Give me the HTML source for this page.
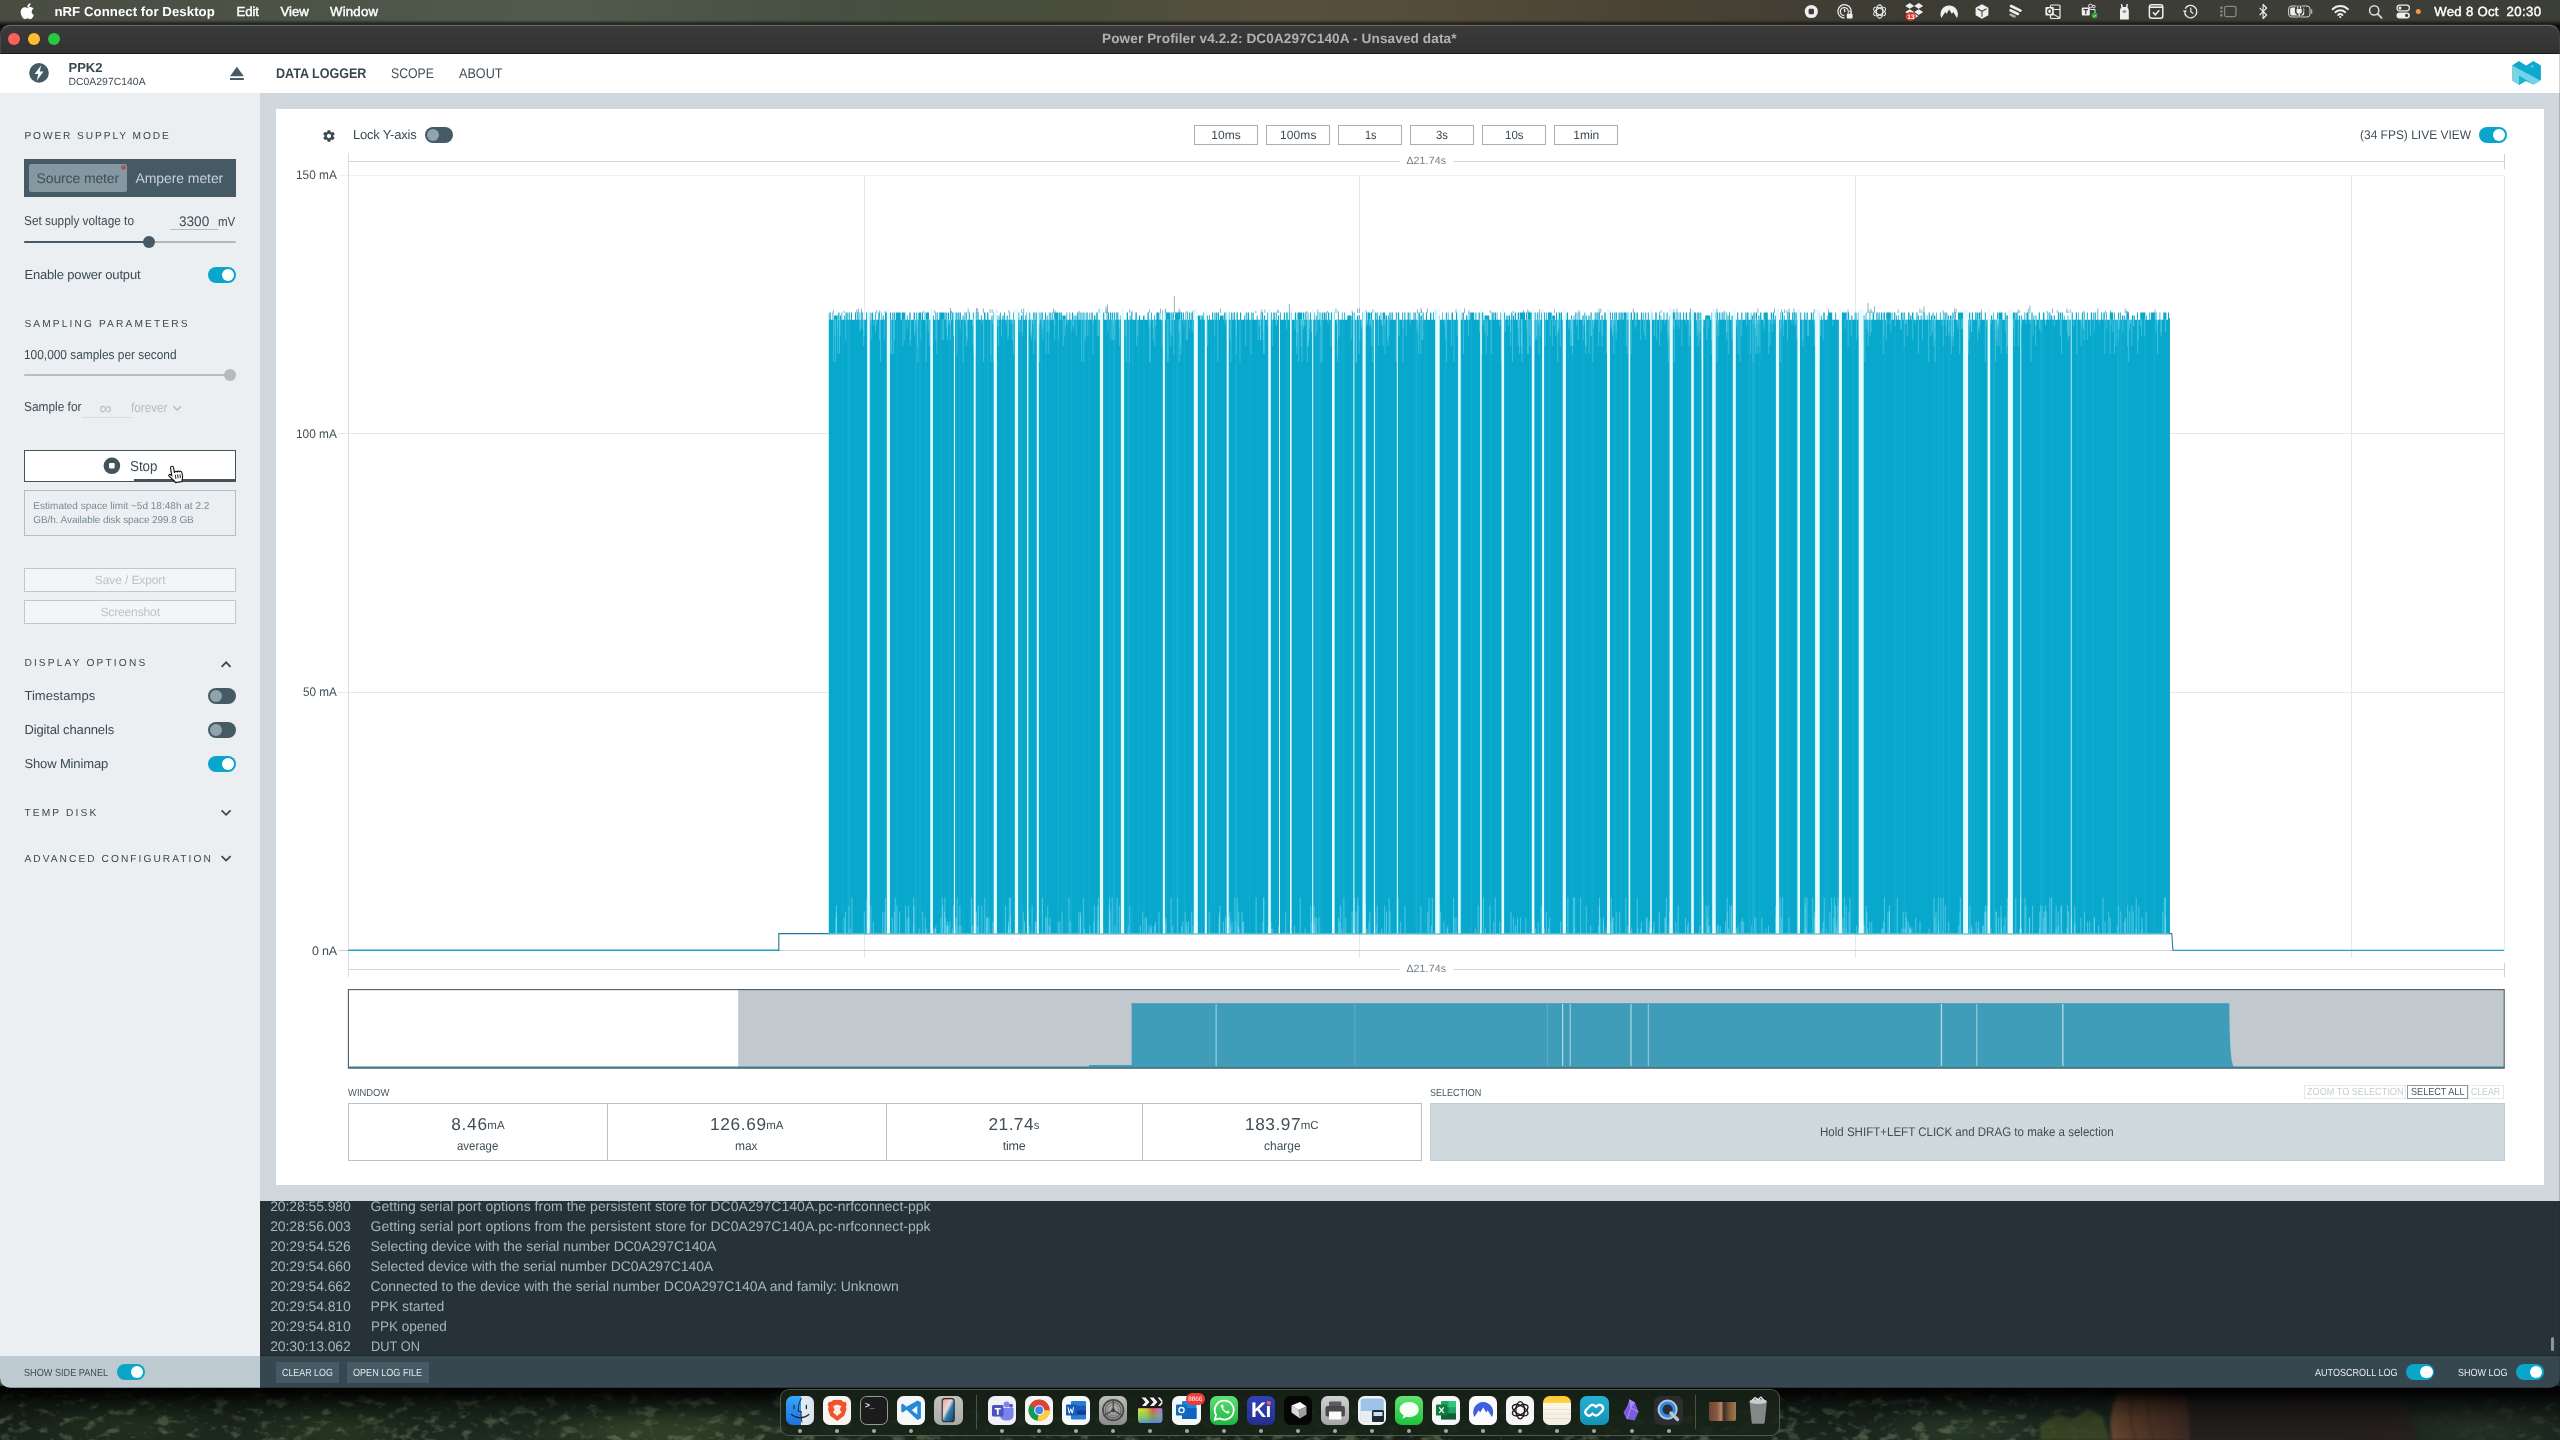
<!DOCTYPE html>
<html lang="en"><head><meta charset="utf-8">
<title>Power Profiler v4.2.2: DC0A297C140A - Unsaved data*</title>
<style>

html,body{margin:0;padding:0;}
body{width:2560px;height:1440px;position:relative;overflow:hidden;background:#1d2b1f;font-family:"Liberation Sans",sans-serif;}
.a{position:absolute;box-sizing:border-box;}
.t{position:absolute;white-space:nowrap;font-family:"Liberation Sans",sans-serif;text-rendering:geometricPrecision;}
svg{position:absolute;overflow:visible;}
#texts{position:absolute;left:0;top:0;width:2560px;height:1440px;will-change:transform;}
.tg{position:absolute;width:28.2px;height:16.2px;border-radius:8.1px;box-sizing:border-box;}
.tg.on{background:#0aa5cb;}
.tg.off{background:#455a64;}
.tg i{position:absolute;top:1.9px;width:12.2px;height:12.2px;border-radius:50%;}
.tg.on i{right:1.9px;background:#fff;}
.tg.off i{left:1.9px;background:#90a4ae;}
.btn{position:absolute;box-sizing:border-box;border:1px solid #a7afb3;background:#fff;}

</style></head>
<body>
<div class="a" style="left:0;top:0;width:2560px;height:30px;background:linear-gradient(90deg,#4a4c41 0%,#4c5447 12%,#515b4c 22%,#465041 33%,#4a4d3c 42%,#57503d 50%,#544a38 57%,#4a4335 64%,#3d3c33 74%,#3b3d36 86%,#3c3e38 100%);"></div>
<div class="a" style="left:0;top:20px;width:2560px;height:16px;background:linear-gradient(rgba(16,16,14,0),rgba(12,12,10,.9) 32%,rgba(10,10,9,.96) 100%);"></div>
<div class="a" style="left:0;top:1380px;width:2560px;height:60px;background:radial-gradient(ellipse 90px 26px at 330px 48px,#2f4228 0%,rgba(50,70,40,0) 100%),radial-gradient(ellipse 110px 26px at 130px 44px,#2b3d28 0%,rgba(50,70,40,0) 100%),radial-gradient(ellipse 120px 24px at 640px 50px,#3d5030 0%,rgba(50,70,40,0) 100%),radial-gradient(ellipse 120px 26px at 700px 46px,#34482e 0%,rgba(50,70,40,0) 100%),radial-gradient(ellipse 100px 24px at 1960px 48px,#33472f 0%,rgba(50,70,40,0) 100%),radial-gradient(ellipse 120px 24px at 2480px 48px,#2c3c2c 0%,rgba(50,70,40,0) 100%),linear-gradient(90deg,#1c2a1d 0%,#223225 20%,#1b291d 45%,#19271d 60%,#1f2d25 78%,#1b2720 100%);"></div>
<svg style="left:0;top:1380px" width="2560" height="60" viewBox="0 0 2560 60"><defs><filter id="fol" x="0" y="0" width="100%" height="100%"><feTurbulence type="fractalNoise" baseFrequency="0.07 0.11" numOctaves="3" seed="11"/><feColorMatrix type="matrix" values="0 0 0 0 0.30  0 0 0 0 0.40  0 0 0 0 0.22  4.2 0 0 0 -2.25"/></filter><linearGradient id="folm" x1="0" y1="0" x2="1" y2="0"><stop offset="0" stop-color="#fff"/><stop offset=".78" stop-color="#fff"/><stop offset=".83" stop-color="#000"/><stop offset=".94" stop-color="#000"/><stop offset="1" stop-color="#777"/></linearGradient><mask id="folk"><rect width="2560" height="60" fill="url(#folm)"/></mask></defs><rect width="2560" height="60" filter="url(#fol)" mask="url(#folk)" opacity=".45"/></svg>
<svg style="left:0;top:1380px" width="2560" height="60" viewBox="0 0 2560 60"><defs><linearGradient id="hr" x1="0" y1="0" x2="1" y2="0"><stop offset="0" stop-color="#7a543c"/><stop offset=".25" stop-color="#68452f"/><stop offset=".55" stop-color="#5a3b2a"/><stop offset="1" stop-color="#45302a"/></linearGradient><filter id="hb"><feGaussianBlur stdDeviation="1.6"/></filter></defs><g filter="url(#hb)"><path d="M2185 12C2230 10 2300 12 2400 18L2420 60H2185Z" fill="#2f2623" opacity=".9"/><path d="M2118 12C2150 8 2176 10 2186 16L2190 60H2112C2108 44 2112 26 2118 12Z" fill="url(#hr)"/><path d="M2134 14c-6 14-4 30 2 46M2150 12c-4 16-2 32 4 48" stroke="#3f2a20" stroke-width="2" fill="none" opacity=".6"/><path d="M2040 44l18-10 14 6 16-12 14 8 8 24h-70z" fill="#5c6e2e" opacity=".55"/></g></svg>
<div class="a" style="left:0;top:1386px;width:2560px;height:54px;background:linear-gradient(rgba(0,0,0,.97) 0,rgba(0,0,0,.9) 14%,rgba(0,0,0,.55) 32%,rgba(0,0,0,.28) 60%,rgba(0,0,0,.12) 100%);"></div>
<div class="a" style="left:780.3px;top:1389.4px;width:999.4px;height:46.2px;border-radius:9px;background:rgba(25,36,25,.86);border:1px solid rgba(150,165,145,.42);"></div>
<div class="a" style="left:976px;top:1395px;width:1px;height:34px;background:rgba(150,160,140,.4);"></div>
<div class="a" style="left:1695.3px;top:1395px;width:1px;height:34px;background:rgba(150,160,140,.4);"></div>
<div class="a" style="left:786.0px;top:1396.2px;width:28.4px;height:28.4px;border-radius:6.6px;background:linear-gradient(90deg,rgba(0,0,0,0) 0,rgba(0,0,0,0) 53%,#e4ebf3 53%,#d9e2ec 100%),linear-gradient(#35a8f8,#1f6fe2);overflow:hidden;"><svg style="left:0;top:0" width="28.4" height="28.4" viewBox="0 0 28.4 28.4"><path d="M8 9.5v3M20.4 9.5v3" stroke="#1d2b3a" stroke-width="1.3" stroke-linecap="round"/><path d="M5.5 18.5c5 4.400 12.400 4.400 17.400 0" stroke="#1d2b3a" stroke-width="1.2" fill="none" stroke-linecap="round"/><path d="M15.6 2c-2.500 4-3.400 8.600-3.400 13.400h3c-.3 4 .2 8 .8 11" stroke="#1d2b3a" stroke-width="1" fill="none"/></svg></div>
<div class="a" style="left:798.2px;top:1429.2px;width:4px;height:4px;border-radius:50%;background:#a6a8a2;"></div>
<div class="a" style="left:823.0px;top:1396.2px;width:28.4px;height:28.4px;border-radius:6.6px;background:#f7f4f2;overflow:hidden;"><svg style="left:0;top:0" width="28.4" height="28.4" viewBox="0 0 28.4 28.4"><path d="M14.2 4l4.200 0 1.800 2 2.400-.3 1.200 3.300-1 1.400.6 3.200-2.200 6.200-7 5.200-7-5.200-2.200-6.200.6-3.200-1-1.400 1.200-3.300 2.400.3 1.800-2z" fill="#f1522b"/><path d="M14.200 8.500l4 1.500-1.300 3.800 1.600 2.400-4.300 3.800-4.300-3.800 1.600-2.400-1.300-3.800z" fill="#fbe9e3"/></svg></div>
<div class="a" style="left:835.2px;top:1429.2px;width:4px;height:4px;border-radius:50%;background:#a6a8a2;"></div>
<div class="a" style="left:860.0px;top:1396.2px;width:28.4px;height:28.4px;border-radius:6.6px;background:#1c1c1c;overflow:hidden;border:1.5px solid #9a9a9a;"><span class="t" style="left:4.200px;top:3.600px;font-size:8.500px;line-height:9px;color:#f2f2f2;font-weight:700;letter-spacing:-.2px;will-change:transform">&gt;_</span></div>
<div class="a" style="left:872.2px;top:1429.2px;width:4px;height:4px;border-radius:50%;background:#a6a8a2;"></div>
<div class="a" style="left:897.1px;top:1396.2px;width:28.4px;height:28.4px;border-radius:6.6px;background:#f4f6f8;overflow:hidden;"><svg style="left:0;top:0" width="28.4" height="28.4" viewBox="0 0 28.4 28.4"><path d="M20.500 4.500l3.400 1.700v16l-3.400 1.700-11-10.200-3.700 2.900-1.500-.8v-7.200l1.500-.8 3.700 2.900zM20.300 9.800l-5.600 4.400 5.600 4.400z" fill="#2489d8"/></svg></div>
<div class="a" style="left:909.3px;top:1429.2px;width:4px;height:4px;border-radius:50%;background:#a6a8a2;"></div>
<div class="a" style="left:934.3px;top:1396.2px;width:28.4px;height:28.4px;border-radius:6.6px;background:linear-gradient(#c2c2be,#a9a9a5);overflow:hidden;"><svg style="left:0;top:0" width="28.4" height="28.4" viewBox="0 0 28.4 28.4"><defs><linearGradient id="ph" x1="0" y1="0" x2="1" y2="1"><stop offset="0" stop-color="#f29a8c"/><stop offset=".42" stop-color="#ecd6dc"/><stop offset=".58" stop-color="#2c7fae"/><stop offset="1" stop-color="#123a60"/></linearGradient></defs><rect x="8.200" y="2.600" width="12" height="23.200" rx="2.600" fill="url(#ph)" stroke="#26282c" stroke-width="1.100"/></svg></div>
<div class="a" style="left:987.5px;top:1396.2px;width:28.4px;height:28.4px;border-radius:6.6px;background:#f1f0f8;overflow:hidden;"><svg style="left:0;top:0" width="28.4" height="28.4" viewBox="0 0 28.4 28.4"><circle cx="18.600" cy="8.600" r="3" fill="#7b83eb"/><circle cx="23" cy="9.800" r="2" fill="#5059c9"/><path d="M12 12h13.500v7.500a5 5 0 0 1-5 5h-3.500a5 5 0 0 1-5-5z" fill="#7b83eb"/><rect x="4" y="9" width="11.500" height="11.500" rx="1.500" fill="#4b53bc"/><path d="M6.800 12h6v1.600h-2.100v5.200h-1.800v-5.200h-2.100z" fill="#fff"/></svg></div>
<div class="a" style="left:999.7px;top:1429.2px;width:4px;height:4px;border-radius:50%;background:#a6a8a2;"></div>
<div class="a" style="left:1025.1px;top:1396.2px;width:28.4px;height:28.4px;border-radius:6.6px;background:#f4f4f2;overflow:hidden;"><svg style="left:0;top:0" width="28.4" height="28.4" viewBox="0 0 28.4 28.4"><circle cx="14.200" cy="14.200" r="10.600" fill="#db4437"/><path d="M14.200 14.200L5 8.900A10.600 10.600 0 0 0 12.500 24.700z" fill="#0f9d58"/><path d="M14.200 14.200L12.500 24.700A10.600 10.600 0 0 0 24.700 12.500z" fill="#ffcd40"/><path d="M14.200 14.200h10.500A10.600 10.600 0 0 0 5 8.900z" fill="#db4437"/><circle cx="14.200" cy="14.200" r="5" fill="#f4f4f2"/><circle cx="14.200" cy="14.200" r="3.900" fill="#4285f4"/></svg></div>
<div class="a" style="left:1037.3px;top:1429.2px;width:4px;height:4px;border-radius:50%;background:#a6a8a2;"></div>
<div class="a" style="left:1061.7px;top:1396.2px;width:28.4px;height:28.4px;border-radius:6.6px;background:#f6f7f9;overflow:hidden;"><svg style="left:0;top:0" width="28.4" height="28.4" viewBox="0 0 28.4 28.4"><rect x="9" y="5" width="15" height="18.400" rx="1.200" fill="#2b7cd3"/><rect x="9" y="9.600" width="15" height="4.600" fill="#185abd"/><rect x="9" y="14.200" width="15" height="4.600" fill="#103f91"/><rect x="4" y="8.600" width="11" height="11" rx="1.200" fill="#185abd"/><path d="M6 11.200l1.300 6 1.500-4.400 1.500 4.400 1.300-6" stroke="#fff" stroke-width="1" fill="none"/></svg></div>
<div class="a" style="left:1073.9px;top:1429.2px;width:4px;height:4px;border-radius:50%;background:#a6a8a2;"></div>
<div class="a" style="left:1098.8px;top:1396.2px;width:28.4px;height:28.4px;border-radius:6.6px;background:linear-gradient(#bdbdbb,#8b8b89);overflow:hidden;"><svg style="left:0;top:0" width="28.4" height="28.4" viewBox="0 0 28.4 28.4"><circle cx="14.200" cy="14.200" r="10.200" fill="none" stroke="#4a4a4a" stroke-width="1.800"/><circle cx="14.200" cy="14.200" r="7.800" fill="none" stroke="#6a6a6a" stroke-width="1.400"/><circle cx="14.200" cy="14.200" r="5.600" fill="none" stroke="#7a7a7a" stroke-width="1"/><path d="M14.200 14.200V5M14.200 14.200l8 4.600M14.200 14.200l-8 4.600" stroke="#444" stroke-width="1.200"/><circle cx="14.200" cy="14.200" r="2" fill="#444"/></svg></div>
<div class="a" style="left:1111.0px;top:1429.2px;width:4px;height:4px;border-radius:50%;background:#a6a8a2;"></div>
<div class="a" style="left:1135.8px;top:1396.2px;width:28.4px;height:28.4px;border-radius:6.6px;background:transparent;overflow:hidden;"><svg style="left:0;top:0" width="28.4" height="28.4" viewBox="0 0 28.4 28.4"><defs><linearGradient id="fc" x1="0" y1="0" x2="1" y2="0"><stop offset="0" stop-color="#f6e93a"/><stop offset=".35" stop-color="#f3c23a"/><stop offset=".6" stop-color="#f2504a"/><stop offset=".85" stop-color="#e85ad0"/><stop offset="1" stop-color="#b46cf0"/></linearGradient><linearGradient id="fc2" x1="0" y1="0" x2="0" y2="1"><stop offset="0" stop-color="#39c05a" stop-opacity="0"/><stop offset=".55" stop-color="#49d05a" stop-opacity=".55"/><stop offset="1" stop-color="#3b8cf2" stop-opacity=".85"/></linearGradient></defs><path d="M2 4.500Q2 1.500 5 1.500H23.400Q26.400 1.500 26.400 4.500V10.500H2z" fill="#1a1a1a"/><path d="M5.500 1.500l4 4.500-4 4.500h4l4-4.500-4-4.500zM13.500 1.500l4 4.500-4 4.500h4l4-4.500-4-4.500zM21.500 1.500l4 4.500-4 4.500h2.500l2.400-3v-3l-2.400-3z" fill="#f1f1f1"/><rect x="2" y="10.500" width="24.400" height="16.400" rx="3.600" fill="url(#fc)"/><rect x="2" y="10.500" width="24.400" height="16.400" rx="3.600" fill="url(#fc2)"/><rect x="2" y="10" width="24.400" height="2.200" fill="#1a1a1a"/></svg></div>
<div class="a" style="left:1148.0px;top:1429.2px;width:4px;height:4px;border-radius:50%;background:#a6a8a2;"></div>
<div class="a" style="left:1172.4px;top:1396.2px;width:28.4px;height:28.4px;border-radius:6.6px;background:#f4f7fa;overflow:hidden;"><svg style="left:0;top:0" width="28.4" height="28.4" viewBox="0 0 28.4 28.4"><rect x="10" y="5" width="14.500" height="18" rx="1.200" fill="#1a86e0"/><rect x="10" y="12" width="14.500" height="11" fill="#0f63bd"/><rect x="4" y="8.600" width="11" height="11" rx="1.200" fill="#0f6cbd"/><circle cx="9.500" cy="14.100" r="2.600" fill="none" stroke="#fff" stroke-width="1.300"/></svg></div>
<div class="a" style="left:1184.6px;top:1429.2px;width:4px;height:4px;border-radius:50%;background:#a6a8a2;"></div>
<div class="a" style="left:1210.0px;top:1396.2px;width:28.4px;height:28.4px;border-radius:6.6px;background:linear-gradient(#5ee077,#1fb53f);overflow:hidden;"><svg style="left:0;top:0" width="28.4" height="28.4" viewBox="0 0 28.4 28.4"><path d="M14.200 4.600a9.500 9.500 0 0 0-8.100 14.400l-1.300 4.700 4.800-1.300a9.500 9.500 0 1 0 4.600-17.800z" fill="none" stroke="#fff" stroke-width="1.800"/><path d="M10.600 9.500c1.600 4.600 3.500 6.600 7.600 8.300l1.700-1.900-2.300-1.500-1.200 1c-1.700-.9-2.700-2-3.500-3.500l1-1.200-1.400-2.400z" fill="#fff"/></svg></div>
<div class="a" style="left:1222.2px;top:1429.2px;width:4px;height:4px;border-radius:50%;background:#a6a8a2;"></div>
<div class="a" style="left:1247.1px;top:1396.2px;width:28.4px;height:28.4px;border-radius:6.6px;background:linear-gradient(#3142b8,#232f8e);overflow:hidden;"><span class="t" style="left:3.600px;top:4px;font-size:21px;line-height:21px;color:#fff;font-weight:700;letter-spacing:-.6px;will-change:transform">Ki</span><div class="a" style="left:20.200px;top:5px;width:3.400px;height:3.400px;border-radius:50%;background:#ef5a60"></div></div>
<div class="a" style="left:1259.3px;top:1429.2px;width:4px;height:4px;border-radius:50%;background:#a6a8a2;"></div>
<div class="a" style="left:1283.6px;top:1396.2px;width:28.4px;height:28.4px;border-radius:6.6px;background:#060606;overflow:hidden;"><svg style="left:0;top:0" width="28.4" height="28.4" viewBox="0 0 28.4 28.4"><path d="M7.500 9.500l8.500-3.500 6.500 4.500-8 3.500z" fill="#fdfdfd"/><path d="M14.500 14l8-3.500v8l-6.500 4z" fill="#9d9d9d"/><path d="M7.500 9.500l7 4.500 1.500 8.500-8.500-6z" fill="#d9d9d9"/></svg></div>
<div class="a" style="left:1295.8px;top:1429.2px;width:4px;height:4px;border-radius:50%;background:#a6a8a2;"></div>
<div class="a" style="left:1320.8px;top:1396.2px;width:28.4px;height:28.4px;border-radius:6.6px;background:linear-gradient(#d2d2d2,#a5a5a5);overflow:hidden;"><svg style="left:0;top:0" width="28.4" height="28.4" viewBox="0 0 28.4 28.4"><rect x="8" y="5.500" width="12.400" height="6" rx="1" fill="#5b5b5b"/><rect x="4.500" y="10" width="19.400" height="10.500" rx="2" fill="#4a4a4a"/><rect x="8" y="15.500" width="12.400" height="8" fill="#fafafa"/></svg></div>
<div class="a" style="left:1333.0px;top:1429.2px;width:4px;height:4px;border-radius:50%;background:#a6a8a2;"></div>
<div class="a" style="left:1358.0px;top:1396.2px;width:28.4px;height:28.4px;border-radius:6.6px;background:#f1f3f6;overflow:hidden;"><svg style="left:0;top:0" width="28.4" height="28.4" viewBox="0 0 28.4 28.4"><rect x="2.600" y="2.600" width="23.200" height="23.200" rx="3" fill="#9cc3ea"/><rect x="2.600" y="15" width="23.200" height="10.800" fill="#e9edf0"/><rect x="14" y="14" width="12" height="12" rx="1.500" fill="#1d2a3a"/><rect x="15.500" y="16" width="9" height="4" fill="#cfe0ee"/></svg></div>
<div class="a" style="left:1370.2px;top:1429.2px;width:4px;height:4px;border-radius:50%;background:#a6a8a2;"></div>
<div class="a" style="left:1394.9px;top:1396.2px;width:28.4px;height:28.4px;border-radius:6.6px;background:linear-gradient(#63e36d,#1fc03d);overflow:hidden;"><svg style="left:0;top:0" width="28.4" height="28.4" viewBox="0 0 28.4 28.4"><path d="M14.200 6c5.400 0 9.600 3.300 9.600 7.600s-4.200 7.600-9.600 7.600c-1 0-2-.1-2.900-.4-1.100.9-2.700 1.500-4.200 1.600.8-.8 1.400-1.800 1.600-2.900-2.500-1.400-4.100-3.500-4.100-5.900 0-4.300 4.200-7.600 9.600-7.600z" fill="#f3fff4"/></svg></div>
<div class="a" style="left:1407.1px;top:1429.2px;width:4px;height:4px;border-radius:50%;background:#a6a8a2;"></div>
<div class="a" style="left:1431.9px;top:1396.2px;width:28.4px;height:28.4px;border-radius:6.6px;background:#f5f8f6;overflow:hidden;"><svg style="left:0;top:0" width="28.4" height="28.4" viewBox="0 0 28.4 28.4"><rect x="9" y="5" width="15" height="18.400" rx="1.200" fill="#21a366"/><rect x="16.500" y="5" width="7.500" height="6.200" fill="#33c481"/><rect x="9" y="11.200" width="7.500" height="6.200" fill="#107c41"/><rect x="9" y="17.400" width="15" height="6" fill="#185c37"/><rect x="4" y="8.600" width="11" height="11" rx="1.200" fill="#107c41"/><path d="M7.200 11.300l4.600 5.600M11.800 11.300l-4.600 5.600" stroke="#fff" stroke-width="1.200"/></svg></div>
<div class="a" style="left:1444.1px;top:1429.2px;width:4px;height:4px;border-radius:50%;background:#a6a8a2;"></div>
<div class="a" style="left:1469.1px;top:1396.2px;width:28.4px;height:28.4px;border-radius:6.6px;background:#fbfbfd;overflow:hidden;"><svg style="left:0;top:0" width="28.4" height="28.4" viewBox="0 0 28.4 28.4"><path d="M5.500 21a10 10 0 1 1 17.400 0l-4.200-6.800-1.400 2.300-3.100-5.100-3.100 5.100-1.400-2.300z" fill="#3e5fdf"/></svg></div>
<div class="a" style="left:1481.3px;top:1429.2px;width:4px;height:4px;border-radius:50%;background:#a6a8a2;"></div>
<div class="a" style="left:1506.1px;top:1396.2px;width:28.4px;height:28.4px;border-radius:6.6px;background:#f6f6f6;overflow:hidden;"><svg style="left:0;top:0" width="28.4" height="28.4" viewBox="0 0 28.4 28.4"><g fill="none" stroke="#1a1a1a" stroke-width="1.300"><ellipse cx="14.200" cy="14.200" rx="4.300" ry="8.600"/><ellipse cx="14.200" cy="14.200" rx="4.300" ry="8.600" transform="rotate(60 14.200 14.200)"/><ellipse cx="14.200" cy="14.200" rx="4.300" ry="8.600" transform="rotate(120 14.200 14.200)"/></g></svg></div>
<div class="a" style="left:1518.3px;top:1429.2px;width:4px;height:4px;border-radius:50%;background:#a6a8a2;"></div>
<div class="a" style="left:1542.8px;top:1396.2px;width:28.4px;height:28.4px;border-radius:6.6px;background:linear-gradient(#fdc62b 0,#fdd54a 24%,#fbf6ea 24%,#f3eee2 100%);overflow:hidden;"><svg style="left:0;top:0" width="28.4" height="28.4" viewBox="0 0 28.4 28.4"><path d="M0 13.500h28.400M0 18h28.400M0 22.500h28.400" stroke="#d9d4c8" stroke-width=".6"/></svg></div>
<div class="a" style="left:1555.0px;top:1429.2px;width:4px;height:4px;border-radius:50%;background:#a6a8a2;"></div>
<div class="a" style="left:1580.2px;top:1396.2px;width:28.4px;height:28.4px;border-radius:6.6px;background:linear-gradient(#23b1d3,#1492b6);overflow:hidden;"><svg style="left:0;top:0" width="28.4" height="28.4" viewBox="0 0 28.4 28.4"><g fill="none" stroke="#fff" stroke-width="2.300" stroke-linecap="round"><path d="M12.500 17.500l-1.500 1.500a3.600 3.600 0 0 1-5-5l4-4a3.600 3.600 0 0 1 5 0"/><path d="M16 11l1.500-1.500a3.600 3.600 0 0 1 5 5l-4 4a3.600 3.600 0 0 1-5 0"/></g></svg></div>
<div class="a" style="left:1592.4px;top:1429.2px;width:4px;height:4px;border-radius:50%;background:#a6a8a2;"></div>
<div class="a" style="left:1617.4px;top:1396.2px;width:28.4px;height:28.4px;border-radius:6.6px;background:transparent;overflow:hidden;"><svg style="left:0;top:0" width="28.4" height="28.4" viewBox="0 0 28.4 28.4"><path d="M12.500 3.500l5.500 3 3.500 9.500-4 8.500-8-1.500-3-6.500 3.500-6z" fill="#7b5be0"/><path d="M12.500 3.500l1.500 8.500-4 11M14 12l7.500 4" stroke="#b9a4ff" stroke-width=".8" fill="none"/><path d="M12.500 3.500l5.500 3-4 5.500z" fill="#a48cff"/></svg></div>
<div class="a" style="left:1629.6px;top:1429.2px;width:4px;height:4px;border-radius:50%;background:#a6a8a2;"></div>
<div class="a" style="left:1654.3px;top:1396.2px;width:28.4px;height:28.4px;border-radius:6.6px;background:#2b2d31;overflow:hidden;"><svg style="left:0;top:0" width="28.4" height="28.4" viewBox="0 0 28.4 28.4"><circle cx="13.600" cy="13.600" r="8.600" fill="#2b2d31" stroke="#b9c4cf" stroke-width="3"/><circle cx="13.600" cy="13.600" r="6.600" fill="none" stroke="#2a8df0" stroke-width="3"/><path d="M17 17l6.500 6.500" stroke="#b9c4cf" stroke-width="3.400" stroke-linecap="round"/></svg></div>
<div class="a" style="left:1666.5px;top:1429.2px;width:4px;height:4px;border-radius:50%;background:#a6a8a2;"></div>
<div class="a" style="left:1708.500px;top:1399.500px;width:27px;height:21px;border-radius:2px;background:linear-gradient(90deg,#6a4536 0,#8a5a40 30%,#b98a6a 45%,#3a2a26 55%,#7a5a3c 75%,#a47850 100%);border-top:2.500px solid #1b1715;"></div>
<svg style="left:1744.3px;top:1396.2px" width="28.4" height="28.4" viewBox="0 0 28.400 28.400"><path d="M5.500 5.500h17.400l-2.200 21a1.500 1.500 0 0 1-1.500 1.300h-10a1.500 1.500 0 0 1-1.500-1.300z" fill="#8c9091" opacity=".92"/><ellipse cx="14.200" cy="5.500" rx="8.700" ry="2.600" fill="#c9cdce"/><path d="M8 4.500l3-3 3 2 3-2.500 3 3.500" stroke="#e9ecec" stroke-width="1.200" fill="none"/></svg>
<div class="a" style="left:1185.500px;top:1393px;width:19.600px;height:12px;border-radius:6px;background:#ee3b34;"></div>
<div id="win" class="a" style="left:0;top:0;width:2559.8px;height:1387.7px;clip-path:inset(24.5px 0 0 0 round 10px);">
<div class="a" style="left:0px;top:24px;width:2560.0px;height:30.0px;background:linear-gradient(#3b3b3b,#323232);border-bottom:1px solid #1a1a1a;"></div>
<div class="a" style="left:0;top:24.5px;width:2559.8px;height:29px;border-radius:10px 10px 0 0;border-top:1px solid rgba(120,120,120,.75);border-left:1px solid rgba(110,110,110,.35);border-right:1px solid rgba(110,110,110,.35);"></div>
<div class="a" style="left:7.8px;top:32.599999999999994px;width:12.4px;height:12.4px;background:#fe5f57;border-radius:50%;"></div>
<div class="a" style="left:27.8px;top:32.599999999999994px;width:12.4px;height:12.4px;background:#febc2e;border-radius:50%;"></div>
<div class="a" style="left:47.8px;top:32.599999999999994px;width:12.4px;height:12.4px;background:#28c840;border-radius:50%;"></div>
<div class="a" style="left:0px;top:54px;width:2560.0px;height:39.0px;background:#fff;"></div>
<div class="a" style="left:0px;top:93px;width:260.0px;height:1262.5px;background:#ebeff1;"></div>
<div class="a" style="left:0px;top:1356px;width:260.0px;height:32.0px;background:#bdcacf;"></div>
<div class="a" style="left:260px;top:93px;width:2300.0px;height:1108.0px;background:#d0d8de;"></div>
<div class="a" style="left:276px;top:109px;width:2267.7px;height:1075.7px;background:#fff;"></div>
<div class="a" style="left:260px;top:1200.7px;width:2300.0px;height:154.8px;background:#263238;"></div>
<div class="a" style="left:260px;top:1355.5px;width:2300.0px;height:32.5px;background:#37474f;"></div>
<div class="a" style="left:2550.7px;top:1336.5px;width:3.8px;height:14.5px;background:#8c979c;border-radius:2px;"></div>
<div class="a" style="left:275.5px;top:1361.5px;width:63.8px;height:21.5px;background:#455a64;"></div>
<div class="a" style="left:346.6px;top:1361.5px;width:82.0px;height:21.5px;background:#455a64;"></div>
<div class="tg on" style="left:2406.3px;top:1364.2px"><i></i></div>
<div class="tg on" style="left:2516px;top:1364.2px"><i></i></div>
<div class="tg on" style="left:117px;top:1364.2px"><i></i></div>
<div class="a" style="left:24px;top:159.2px;width:212.0px;height:37.8px;background:#455a64;"></div>
<div class="a" style="left:29.2px;top:164.2px;width:97.8px;height:27.6px;background:#8598a2;border-radius:2px;"></div>
<div class="a" style="left:121px;top:165.3px;width:4.8px;height:4.8px;background:#a25a60;border-radius:50%;"></div>
<div class="a" style="left:170.4px;top:228.8px;width:47.3px;height:1.0px;background:#b0bec5;"></div>
<div class="a" style="left:24px;top:241px;width:212.0px;height:2.0px;background:#b3b8bb;border-radius:1px;"></div>
<div class="a" style="left:24px;top:241px;width:125.0px;height:2.0px;background:#455a64;border-radius:1px;"></div>
<div class="a" style="left:143.1px;top:236.1px;width:11.8px;height:11.8px;background:#455a64;border-radius:50%;"></div>
<div class="tg on" style="left:208px;top:267px"><i></i></div>
<div class="a" style="left:24px;top:374px;width:212.0px;height:2.0px;background:#b9bec1;border-radius:1px;"></div>
<div class="a" style="left:223.9px;top:369.1px;width:11.8px;height:11.8px;background:#b6babd;border-radius:50%;"></div>
<div class="a" style="left:82.3px;top:416.5px;width:49.0px;height:1.0px;background:#d5dbde;"></div>
<div class="a" style="left:24px;top:450.3px;width:212.0px;height:31.4px;background:#fff;border:1.4px solid #44525a;"></div>
<div class="a" style="left:134.4px;top:478.8px;width:101.6px;height:2.9px;background:#44525a;"></div>
<div class="a" style="left:24px;top:490.4px;width:212.0px;height:45.2px;border:1px solid #b4bec4;"></div>
<div class="a" style="left:24px;top:568.2px;width:212.0px;height:23.6px;background:#f3f5f6;border:1px solid #bfc8cc;"></div>
<div class="a" style="left:24px;top:600.2px;width:212.0px;height:23.6px;background:#f3f5f6;border:1px solid #bfc8cc;"></div>
<div class="tg off" style="left:208px;top:687.9px"><i></i></div>
<div class="tg off" style="left:208px;top:721.9px"><i></i></div>
<div class="tg on" style="left:208px;top:755.8px"><i></i></div>
<div class="tg off" style="left:425px;top:127px"><i></i></div>
<div class="tg on" style="left:2479px;top:127px"><i></i></div>
<div class="btn" style="left:1194px;top:125.3px;width:64px;height:19.6px;"></div>
<div class="btn" style="left:1266.2px;top:125.3px;width:64px;height:19.6px;"></div>
<div class="btn" style="left:1338.3px;top:125.3px;width:64px;height:19.6px;"></div>
<div class="btn" style="left:1410.2px;top:125.3px;width:64px;height:19.6px;"></div>
<div class="btn" style="left:1482.2px;top:125.3px;width:64px;height:19.6px;"></div>
<div class="btn" style="left:1554.3px;top:125.3px;width:64px;height:19.6px;"></div>
<div class="a" style="left:348px;top:1103px;width:1074.0px;height:58.0px;border:1px solid #b9c1c5;background:#fff;"></div>
<div class="a" style="left:607.2px;top:1103px;width:1.0px;height:58.0px;background:#b9c1c5;"></div>
<div class="a" style="left:885.8px;top:1103px;width:1.0px;height:58.0px;background:#b9c1c5;"></div>
<div class="a" style="left:1141.9px;top:1103px;width:1.0px;height:58.0px;background:#b9c1c5;"></div>
<div class="a" style="left:1430px;top:1103px;width:1074.5px;height:58.0px;background:#cfd8dc;border:1px solid #c2ccd1;"></div>
<div class="a" style="left:2304px;top:1085px;width:102.4px;height:13.7px;border:1px solid #e6e9eb;"></div>
<div class="a" style="left:2406.8px;top:1085px;width:60.9px;height:13.7px;border:1px solid #8d989d;"></div>
<div class="a" style="left:2468.2px;top:1085px;width:35.4px;height:13.7px;border:1px solid #e6e9eb;"></div>
</div>
<svg id="chart" style="left:0;top:0" width="2560" height="1440" viewBox="0 0 2560 1440">
<g stroke="#e6e8e9" stroke-width="1" fill="none" shape-rendering="crispEdges">
<path d="M337.5 433.7H2504.2"/>
<path d="M337.5 692.1H2504.2"/>
<path d="M864.0 175.5V958"/>
<path d="M1359.3 175.5V958"/>
<path d="M1855.6 175.5V958"/>
<path d="M2351.6 175.5V958"/>
<path d="M2504.2 175.5V950.4"/>
</g>
<path d="M337.5 175.5H2504.2" stroke="#eff1f2" stroke-width="1" fill="none" shape-rendering="crispEdges"/>
<g stroke="#cdd2d5" stroke-width="1" fill="none" shape-rendering="crispEdges">
<path d="M348.5 153V976.5" stroke="#d9dcde"/>
<path d="M337.5 950.4H2504.2"/>
<path d="M348.5 161.5H1399.5M1453.5 161.5H2504.5M2504.5 153.5V169"/>
<path d="M348.5 969.5H1399.5M1453.5 969.5H2504.5M2504.5 963V976.5"/>
</g>
<path d="M828.8 933.6V319.8V312.4H829.6V319.8H830.1V312.4H830.9V319.8H832.5V312.4H833.3V319.8H834.0V315.6H837.7V319.8H838.2V312.4H839.4V319.8H839.9V315.6H841.0V319.8H841.5V312.4H842.3V319.8H843.9V315.6H844.8V319.8H845.5V312.4H846.7V319.8H847.2V312.4H847.9V319.8H848.6V312.4H849.7V319.8H850.9V312.4H852.0V319.8H855.0V312.4H856.3V319.8H857.2V312.4H858.6V319.8H859.5V312.4H860.3V319.8H861.0V312.4H861.8V319.8H862.3V312.4H863.1V319.8H866.1V312.4H867.0V319.8H868.6V312.4H870.0V319.8H870.5V312.4H871.5V319.8H872.0V312.4H873.0V319.8H875.2V312.4H876.1V319.8H878.3V312.4H879.8V319.8H881.4V312.4H882.1V319.8H882.8V315.6H883.8V319.8H885.0V312.4H888.9V319.8H889.6V312.4H891.0V319.8H892.2V312.4H893.4V319.8H894.1V312.4H895.0V319.8H895.7V312.4H900.7V319.8H901.6V312.4H905.3V319.8H906.9V315.6H907.7V319.8H909.3V312.4H910.6V319.8H913.6V312.4H915.0V319.8H916.2V312.4H917.2V319.8H918.4V312.4H921.1V319.8H921.8V312.4H923.0V319.8H924.6V312.4H925.4V319.8H925.9V312.4H929.0V319.8H931.2V312.4H932.2V319.8H932.7V315.6H933.8V319.8H935.0V312.4H935.7V319.8H936.6V312.4H937.7V319.8H939.3V312.4H944.7V319.8H945.4V312.4H946.8V319.8H947.7V312.4H949.1V319.8H950.0V312.4H951.4V319.8H952.1V312.4H953.5V319.8H954.2V312.4H955.5V319.8H956.2V312.4H957.5V319.8H958.2V312.4H959.3V319.8H959.8V312.4H960.9V319.8H962.5V315.6H963.6V319.8H964.5V312.4H965.5V319.8H966.2V312.4H967.1V319.8H968.7V312.4H969.8V319.8H972.8V312.4H974.2V319.8H975.4V312.4H976.7V319.8H977.4V312.4H978.6V319.8H980.8V315.6H981.8V319.8H984.0V312.4H985.5V319.8H987.1V312.4H988.4V319.8H991.4V315.6H992.5V319.8H993.2V312.4H994.0V319.8H996.2V315.6H997.4V319.8H998.6V315.6H999.4V319.8H999.9V312.4H1000.8V319.8H1002.4V315.6H1003.6V319.8H1004.1V312.4H1005.1V319.8H1006.7V315.6H1007.8V319.8H1009.4V312.4H1010.2V319.8H1013.2V312.4H1014.0V319.8H1017.0V312.4H1017.9V319.8H1018.4V312.4H1019.3V319.8H1020.9V315.6H1022.2V319.8H1022.7V312.4H1023.7V319.8H1025.3V315.6H1026.0V319.8H1026.5V312.4H1027.7V319.8H1029.3V312.4H1030.2V319.8H1033.2V312.4H1034.6V319.8H1035.5V312.4H1037.0V319.8H1038.2V312.4H1039.0V319.8H1039.5V312.4H1040.5V319.8H1041.4V312.4H1042.8V319.8H1045.0V312.4H1046.0V319.8H1046.7V315.6H1047.6V319.8H1048.8V312.4H1049.6V319.8H1050.3V312.4H1051.4V319.8H1052.3V312.4H1053.3V319.8H1054.2V312.4H1058.3V319.8H1058.8V312.4H1059.9V319.8H1060.4V312.4H1061.9V319.8H1062.4V315.6H1065.7V319.8H1066.4V312.4H1067.2V319.8H1069.4V312.4H1070.3V319.8H1071.9V312.4H1073.1V319.8H1073.6V315.6H1074.5V319.8H1075.4V315.6H1076.6V319.8H1077.1V312.4H1078.0V319.8H1078.5V312.4H1079.5V319.8H1080.4V312.4H1081.1V319.8H1081.6V312.4H1082.5V319.8H1083.4V312.4H1084.5V319.8H1085.7V312.4H1086.6V319.8H1087.1V312.4H1087.8V319.8H1089.4V312.4H1090.2V319.8H1091.4V312.4H1092.8V319.8H1094.0V315.6H1095.4V319.8H1096.3V312.4H1097.8V319.8H1100.8V312.4H1102.1V319.8H1103.0V312.4H1104.3V319.8H1106.5V312.4H1107.5V319.8H1108.0V312.4H1109.0V319.8H1109.9V312.4H1111.1V319.8H1111.8V312.4H1112.9V319.8H1113.8V312.4H1114.9V319.8H1115.8V312.4H1116.7V319.8H1117.2V312.4H1118.3V319.8H1119.9V315.6H1120.6V319.8H1121.3V312.4H1122.1V319.8H1123.0V315.6H1123.7V319.8H1126.7V312.4H1128.0V319.8H1129.6V315.6H1130.5V319.8H1131.2V312.4H1132.4V319.8H1135.4V312.4H1136.8V319.8H1139.0V315.6H1140.1V319.8H1143.1V315.6H1144.5V319.8H1147.5V312.4H1148.8V319.8H1151.0V312.4H1151.8V319.8H1154.0V315.6H1154.8V319.8H1156.4V312.4H1158.9V319.8H1159.6V312.4H1160.3V319.8H1162.5V312.4H1164.0V319.8H1165.6V312.4H1170.3V319.8H1170.8V312.4H1171.7V319.8H1172.4V312.4H1173.8V319.8H1175.0V312.4H1180.3V319.8H1180.8V312.4H1182.0V319.8H1182.7V312.4H1183.9V319.8H1185.5V312.4H1186.2V319.8H1187.1V312.4H1187.9V319.8H1189.1V312.4H1190.2V319.8H1191.4V312.4H1192.9V319.8H1193.8V312.4H1195.3V319.8H1196.5V315.6H1200.5V319.8H1201.4V315.6H1202.8V319.8H1203.3V312.4H1204.1V319.8H1205.0V312.4H1206.4V319.8H1206.9V315.6H1207.8V319.8H1209.0V315.6H1209.8V319.8H1212.0V312.4H1212.9V319.8H1213.8V312.4H1214.6V319.8H1215.5V312.4H1216.9V319.8H1217.6V312.4H1219.0V319.8H1219.9V315.6H1223.6V319.8H1224.1V312.4H1225.1V319.8H1225.6V312.4H1226.4V319.8H1228.6V312.4H1229.5V319.8H1231.1V312.4H1232.4V319.8H1233.6V312.4H1234.9V319.8H1236.5V312.4H1237.8V319.8H1240.0V312.4H1241.2V319.8H1244.2V315.6H1245.0V319.8H1245.7V312.4H1246.7V319.8H1247.6V312.4H1249.1V319.8H1251.3V312.4H1252.3V319.8H1252.8V312.4H1253.7V319.8H1256.7V315.6H1257.6V319.8H1260.6V312.4H1261.4V319.8H1261.9V312.4H1263.0V319.8H1263.9V315.6H1265.1V319.8H1267.3V312.4H1268.3V319.8H1269.0V312.4H1269.9V319.8H1270.8V312.4H1271.8V319.8H1273.4V312.4H1274.8V319.8H1275.7V312.4H1276.7V319.8H1277.9V315.6H1279.3V319.8H1279.8V312.4H1280.8V319.8H1283.8V312.4H1285.0V319.8H1286.2V312.4H1287.7V319.8H1288.9V312.4H1289.8V319.8H1290.5V312.4H1291.9V319.8H1294.9V312.4H1296.2V319.8H1297.4V312.4H1302.2V319.8H1302.9V312.4H1304.3V319.8H1305.2V312.4H1306.4V319.8H1307.6V312.4H1308.4V319.8H1310.0V312.4H1310.9V319.8H1313.9V312.4H1314.6V319.8H1315.8V315.6H1316.7V319.8H1317.4V312.4H1318.3V319.8H1319.5V312.4H1320.5V319.8H1321.7V312.4H1322.9V319.8H1323.6V312.4H1325.0V319.8H1325.5V312.4H1326.8V319.8H1328.0V312.4H1329.3V319.8H1330.9V312.4H1334.9V319.8H1337.9V312.4H1338.8V319.8H1341.8V312.4H1342.6V319.8H1344.2V312.4H1345.1V319.8H1347.3V315.6H1351.6V319.8H1352.1V312.4H1353.5V319.8H1354.0V312.4H1354.9V319.8H1357.1V315.6H1358.4V319.8H1359.1V315.6H1359.9V319.8H1362.1V312.4H1363.1V319.8H1366.1V312.4H1367.0V319.8H1367.5V312.4H1370.3V319.8H1370.8V312.4H1372.1V319.8H1375.1V312.4H1376.4V319.8H1376.9V312.4H1377.8V319.8H1379.0V315.6H1380.0V319.8H1380.5V312.4H1381.4V319.8H1382.6V312.4H1385.2V319.8H1385.7V315.6H1387.0V319.8H1387.9V315.6H1388.9V319.8H1389.4V312.4H1390.6V319.8H1391.5V312.4H1392.8V319.8H1395.8V312.4H1397.3V319.8H1398.0V312.4H1399.2V319.8H1402.2V312.4H1403.1V319.8H1404.3V312.4H1405.4V319.8H1407.6V312.4H1408.9V319.8H1409.6V312.4H1410.5V319.8H1413.5V312.4H1414.6V319.8H1415.3V312.4H1416.1V319.8H1417.7V312.4H1418.5V319.8H1419.0V312.4H1419.9V319.8H1420.4V315.6H1421.9V319.8H1422.6V312.4H1423.7V319.8H1425.9V312.4H1427.0V319.8H1430.0V312.4H1431.4V319.8H1433.0V312.4H1433.9V319.8H1435.1V312.4H1436.0V319.8H1437.6V312.4H1438.3V319.8H1439.0V315.6H1439.9V319.8H1442.1V312.4H1442.8V319.8H1445.8V312.4H1446.9V319.8H1447.8V312.4H1448.5V319.8H1451.5V312.4H1453.0V319.8H1456.0V312.4H1457.2V319.8H1459.4V312.4H1460.1V319.8H1461.7V312.4H1462.5V319.8H1463.0V312.4H1463.9V319.8H1466.1V315.6H1467.4V319.8H1468.6V312.4H1469.5V319.8H1470.2V312.4H1474.2V319.8H1475.4V312.4H1476.4V319.8H1478.6V312.4H1479.8V319.8H1480.7V312.4H1481.6V319.8H1482.1V312.4H1483.3V319.8H1484.5V315.6H1489.3V319.8H1491.5V312.4H1492.8V319.8H1493.3V312.4H1494.1V319.8H1494.6V312.4H1496.0V319.8H1496.7V312.4H1497.4V319.8H1500.4V312.4H1501.2V319.8H1502.1V312.4H1502.9V319.8H1503.6V312.4H1505.1V319.8H1506.3V315.6H1507.6V319.8H1508.5V315.6H1510.0V319.8H1511.2V312.4H1512.4V319.8H1512.9V315.6H1514.1V319.8H1514.8V312.4H1516.1V319.8H1517.7V312.4H1519.1V319.8H1519.8V312.4H1525.1V319.8H1526.0V312.4H1526.9V319.8H1527.6V312.4H1531.8V319.8H1532.3V312.4H1533.3V319.8H1534.5V312.4H1535.7V319.8H1536.9V312.4H1537.8V319.8H1538.7V312.4H1539.7V319.8H1541.3V312.4H1542.4V319.8H1544.0V312.4H1545.1V319.8H1546.3V312.4H1547.0V319.8H1547.9V312.4H1551.7V319.8H1552.2V315.6H1555.1V319.8H1556.0V312.4H1557.1V319.8H1558.7V312.4H1560.0V319.8H1560.5V312.4H1562.0V319.8H1565.0V315.6H1565.8V319.8H1566.7V312.4H1568.1V319.8H1571.1V315.6H1572.0V319.8H1573.6V315.6H1574.4V319.8H1575.3V312.4H1576.4V319.8H1577.6V312.4H1578.5V319.8H1579.4V312.4H1580.2V319.8H1582.4V315.6H1583.7V319.8H1584.4V312.4H1585.3V319.8H1585.8V315.6H1586.8V319.8H1588.4V315.6H1589.6V319.8H1590.5V312.4H1591.7V319.8H1594.7V312.4H1595.7V319.8H1596.4V312.4H1597.7V319.8H1598.4V312.4H1599.9V319.8H1601.5V315.6H1602.7V319.8H1604.3V312.4H1605.7V319.8H1607.9V312.4H1610.9V319.8H1612.1V312.4H1613.1V319.8H1614.3V312.4H1615.5V319.8H1616.0V312.4H1616.9V319.8H1618.5V312.4H1619.7V319.8H1620.4V312.4H1621.8V319.8H1622.3V312.4H1623.2V319.8H1623.7V312.4H1626.6V319.8H1627.5V312.4H1628.4V319.8H1630.6V312.4H1632.0V319.8H1633.6V312.4H1635.1V319.8H1635.8V312.4H1636.5V319.8H1637.0V312.4H1637.9V319.8H1640.9V312.4H1642.1V319.8H1642.8V312.4H1643.6V319.8H1645.2V312.4H1646.2V319.8H1647.8V312.4H1648.8V319.8H1651.0V312.4H1652.3V319.8H1655.3V312.4H1656.7V319.8H1658.9V312.4H1659.8V319.8H1660.5V315.6H1661.3V319.8H1663.5V312.4H1664.4V319.8H1666.6V312.4H1667.6V319.8H1669.2V315.6H1670.2V319.8H1670.9V312.4H1674.9V319.8H1675.6V312.4H1676.5V319.8H1677.4V312.4H1678.4V319.8H1679.6V312.4H1680.8V319.8H1683.0V312.4H1684.1V319.8H1685.7V312.4H1687.1V319.8H1689.3V312.4H1690.7V319.8H1691.9V315.6H1692.7V319.8H1693.4V312.4H1696.2V319.8H1696.9V312.4H1697.7V319.8H1698.2V312.4H1699.4V319.8H1699.9V312.4H1700.7V319.8H1701.6V312.4H1703.0V319.8H1705.2V315.6H1710.3V319.8H1711.5V312.4H1712.4V319.8H1712.9V312.4H1714.3V319.8H1714.8V312.4H1716.0V319.8H1716.5V312.4H1717.9V319.8H1718.8V312.4H1719.8V319.8H1720.7V312.4H1721.4V319.8H1722.3V312.4H1723.5V319.8H1724.4V312.4H1725.2V319.8H1726.4V312.4H1727.1V319.8H1727.6V315.6H1728.5V319.8H1729.0V312.4H1729.9V319.8H1731.5V315.6H1732.8V319.8H1733.3V312.4H1734.1V319.8H1737.1V312.4H1738.2V319.8H1741.2V312.4H1742.4V319.8H1745.4V312.4H1746.6V319.8H1747.1V312.4H1748.5V319.8H1750.7V312.4H1751.4V319.8H1751.9V315.6H1752.9V319.8H1753.4V312.4H1754.7V319.8H1755.6V312.4H1757.0V319.8H1758.2V315.6H1759.4V319.8H1760.1V312.4H1761.4V319.8H1763.6V312.4H1767.8V319.8H1770.8V312.4H1772.1V319.8H1772.8V312.4H1774.0V319.8H1774.7V315.6H1775.8V319.8H1776.5V312.4H1777.4V319.8H1780.4V312.4H1781.2V319.8H1781.9V312.4H1783.1V319.8H1783.8V315.6H1784.7V319.8H1786.9V312.4H1787.7V319.8H1788.4V312.4H1789.9V319.8H1792.1V312.4H1793.0V319.8H1793.5V312.4H1794.9V319.8H1795.4V312.4H1796.7V319.8H1798.3V312.4H1799.3V319.8H1800.2V312.4H1801.2V319.8H1804.2V312.4H1805.4V319.8H1806.6V312.4H1807.8V319.8H1810.8V312.4H1812.0V319.8H1812.7V312.4H1813.7V319.8H1815.9V312.4H1817.3V319.8H1818.5V312.4H1819.7V319.8H1820.9V315.6H1821.7V319.8H1823.3V312.4H1824.7V319.8H1826.9V315.6H1827.6V319.8H1828.1V312.4H1832.2V319.8H1835.2V312.4H1836.1V319.8H1839.1V312.4H1840.2V319.8H1841.8V312.4H1846.7V319.8H1847.6V312.4H1849.1V319.8H1851.3V315.6H1852.4V319.8H1854.6V312.4H1855.6V319.8H1856.5V312.4H1857.2V319.8H1858.4V312.4H1859.7V319.8H1860.2V315.6H1861.4V319.8H1863.0V315.6H1864.5V319.8H1865.7V312.4H1866.5V319.8H1869.5V312.4H1870.4V319.8H1872.6V312.4H1874.1V319.8H1876.3V312.4H1877.6V319.8H1878.5V312.4H1879.7V319.8H1880.9V312.4H1882.3V319.8H1883.5V312.4H1885.0V319.8H1886.2V312.4H1890.9V319.8H1891.6V312.4H1892.5V319.8H1894.1V312.4H1895.3V319.8H1896.2V315.6H1897.0V319.8H1897.9V315.6H1898.7V319.8H1900.9V312.4H1902.1V319.8H1902.6V312.4H1903.5V319.8H1904.2V312.4H1905.1V319.8H1908.1V312.4H1909.5V319.8H1910.2V315.6H1911.5V319.8H1912.0V312.4H1913.4V319.8H1916.4V312.4H1917.5V319.8H1918.0V315.6H1919.0V319.8H1920.6V315.6H1921.6V319.8H1922.8V312.4H1923.6V319.8H1924.3V312.4H1925.2V319.8H1926.8V315.6H1927.5V319.8H1928.7V312.4H1929.8V319.8H1931.0V315.6H1932.0V319.8H1932.5V312.4H1933.5V319.8H1934.0V315.6H1935.3V319.8H1936.2V312.4H1936.9V319.8H1939.9V312.4H1940.7V319.8H1942.9V312.4H1943.6V319.8H1944.5V312.4H1945.7V319.8H1946.4V312.4H1947.3V319.8H1947.8V315.6H1948.8V319.8H1950.0V315.6H1951.5V319.8H1952.4V312.4H1953.6V319.8H1954.5V312.4H1955.8V319.8H1958.0V312.4H1963.4V319.8H1965.0V312.4H1966.2V319.8H1967.1V315.6H1967.8V319.8H1969.0V312.4H1970.2V319.8H1971.8V312.4H1973.0V319.8H1975.2V312.4H1976.6V319.8H1977.1V312.4H1978.2V319.8H1978.7V312.4H1980.1V319.8H1980.6V312.4H1981.8V319.8H1984.8V312.4H1985.8V319.8H1988.8V312.4H1989.8V319.8H1991.0V315.6H1992.2V319.8H1993.4V312.4H1994.1V319.8H1997.1V312.4H1998.4V319.8H1998.9V312.4H2002.5V319.8H2004.7V312.4H2005.8V319.8H2006.3V315.6H2010.2V319.8H2012.4V312.4H2014.9V319.8H2015.4V312.4H2016.8V319.8H2017.3V312.4H2018.0V319.8H2018.7V315.6H2020.0V319.8H2020.9V315.6H2022.2V319.8H2024.4V312.4H2025.3V319.8H2026.5V312.4H2028.0V319.8H2028.5V312.4H2029.2V319.8H2031.4V312.4H2032.6V319.8H2033.5V315.6H2034.3V319.8H2035.5V315.6H2036.5V319.8H2038.7V312.4H2039.9V319.8H2042.9V312.4H2044.4V319.8H2047.4V312.4H2048.4V319.8H2049.3V312.4H2050.4V319.8H2050.9V315.6H2052.2V319.8H2053.8V315.6H2054.9V319.8H2057.9V312.4H2059.3V319.8H2060.0V312.4H2061.3V319.8H2062.0V312.4H2062.9V319.8H2063.8V315.6H2064.6V319.8H2067.6V315.6H2068.3V319.8H2071.3V312.4H2072.8V319.8H2075.8V312.4H2077.0V319.8H2078.2V312.4H2078.9V319.8H2081.9V312.4H2083.3V319.8H2084.0V312.4H2084.7V319.8H2086.9V312.4H2087.8V319.8H2090.8V312.4H2092.0V319.8H2092.9V312.4H2093.7V319.8H2094.6V312.4H2095.8V319.8H2097.4V312.4H2098.2V319.8H2101.2V312.4H2102.2V319.8H2103.4V312.4H2104.8V319.8H2106.0V312.4H2106.8V319.8H2109.8V312.4H2113.2V319.8H2114.1V312.4H2114.9V319.8H2117.9V312.4H2118.9V319.8H2119.8V312.4H2120.8V319.8H2122.0V315.6H2123.3V319.8H2124.2V315.6H2125.2V319.8H2126.4V312.4H2129.0V319.8H2132.0V315.6H2133.1V319.8H2133.6V315.6H2134.8V319.8H2137.0V312.4H2138.0V319.8H2140.2V312.4H2145.4V319.8H2146.1V315.6H2146.9V319.8H2149.1V312.4H2149.9V319.8H2150.8V312.4H2154.9V319.8H2155.4V312.4H2156.5V319.8H2159.5V312.4H2160.3V319.8H2163.3V312.4H2166.4V319.8H2168.0V312.4H2169.0V319.8H2169.0V933.6Z" fill="#08a8cd"/>
<path d="M1327.4 310.8V313M996.7 310.8V313M1338.1 310.8V313M1149.4 309.4V313M2052.5 308.6V313M1456.0 309.4V313M1898.2 309.4V313M2070.4 309.4V313M934.7 310.2V313M2018.3 309.4V313M1870.8 308.6V313M2068.0 310.8V313M1956.2 308.6V313M1435.2 310.2V313M1261.8 309.4V313M1468.9 310.2V313M1021.6 309.4V313M1814.3 309.4V313M1784.5 309.4V313M1417.4 309.4V313M1186.8 310.8V313M1160.5 308.6V313M1193.1 310.2V313M1277.8 309.4V313M1179.1 308.6V313M1255.8 310.8V313M983.4 308.6V313M1673.9 309.4V313M1579.0 310.2V313M990.1 309.4V313M2127.8 310.8V313M2155.0 309.4V313M2066.9 308.6V313M1352.1 310.8V313M2028.3 308.6V313M1943.0 310.2V313M1023.7 308.6V313M1421.5 310.2V313M1513.3 310.8V313M833.4 310.2V313M1079.1 310.8V313M885.0 310.8V313M1122.4 309.4V313M1015.3 309.4V313M1527.8 309.4V313M1781.7 309.4V313M1633.4 308.6V313M2019.1 310.8V313M1848.0 309.4V313M1106.1 309.4V313M1609.7 309.4V313M844.2 310.8V313M1954.6 308.6V313M1523.6 310.2V313M1278.7 310.8V313M951.5 310.8V313M2047.0 310.8V313M1008.9 310.2V313M1162.6 310.2V313M879.8 310.2V313M1599.0 308.6V313M1306.7 310.8V313M2125.2 308.6V313M992.2 309.4V313M1921.9 310.2V313M1871.9 310.8V313M1600.9 308.6V313M1220.4 308.6V313M2105.6 310.8V313M1427.3 308.6V313M1539.7 309.4V313M858.4 308.6V313M1129.7 309.4V313M1055.1 310.2V313M1165.5 308.6V313M856.8 309.4V313M1180.1 310.8V313M1529.5 310.8V313M968.2 308.6V313M1789.0 308.6V313M1195.6 310.8V313M1490.3 310.2V313M977.8 308.6V313M1372.8 309.4V313M1554.5 309.4V313M1981.4 309.4V313M1724.4 310.8V313M1828.4 309.4V313M2097.8 308.6V313M2083.6 310.8V313M1757.9 308.6V313M1359.4 308.6V313M1868.9 310.2V313M1366.2 310.2V313M1786.9 310.2V313M1919.9 308.6V313M1264.9 309.4V313M2110.7 310.2V313M1163.9 310.8V313M1716.9 308.6V313M1317.8 309.4V313M923.4 310.8V313M1099.1 308.6V313M1132.1 310.8V313M2126.5 310.8V313M1676.9 308.6V313M876.7 310.2V313M2057.3 310.2V313M1670.3 308.6V313M1660.9 310.2V313M1174.3 296.2V313M1289.4 304.0V313M1106 306.5V313M861.5 308.5V313M1868 303V313M1874.5 306.5V313M2030 305.5V313M1924 306.5V313M950.5 308V313M976.5 308V313M1053.5 308.5V313M1107.5 304.5V313M1690.5 308.5V313M1774.5 308.5V313M1794 308.5V313M1336 308.3V313M1357.5 308.5V313M1421 308V313M1464.5 308.3V313" stroke="#2b87a2" stroke-width="0.6" fill="none"/>
<path d="M992.7 319V324M1410.2 319V324M1214.6 319V336M1294.9 319V329M990.9 319V362M2036.1 319V326M1454.0 319V362M2076.9 319V354M995.6 319V329M2014.4 319V346M1602.4 319V336M1155.5 319V326M1820.6 319V336M1953.5 319V332M1700.1 319V332M1563.9 319V340M1446.6 319V362M1236.2 319V354M1457.4 319V336M871.2 319V340M1126.3 319V362M1560.3 319V346M845.7 319V340M1047.0 319V332M1263.3 319V340M1487.4 319V336M2005.2 319V332M1225.2 319V324M1042.0 319V326M1640.6 319V340M1418.6 319V324M1521.6 319V354M1303.7 319V326M1526.9 319V329M1387.5 319V340M1017.6 319V332M1654.5 319V336M1928.7 319V362M957.0 319V354M1189.4 319V329M1382.5 319V326M835.6 319V362M1613.8 319V354M1361.7 319V329M1389.0 319V336M1997.7 319V326M1337.7 319V354M1756.7 319V336M1797.4 319V336M1302.1 319V362M1573.0 319V346M1697.2 319V324M1883.1 319V354M1339.2 319V336M1076.3 319V336M1904.3 319V346M1599.8 319V332M947.5 319V340M1263.2 319V332M2112.8 319V332M2130.7 319V324M864.0 319V336M1585.8 319V354M1231.0 319V362M1864.9 319V362M1659.5 319V346M1522.2 319V362M1802.8 319V346M1351.1 319V340M884.3 319V340M1436.1 319V324M1735.1 319V362M1136.6 319V346M1330.8 319V346M1697.7 319V329M2007.2 319V346M1481.1 319V354M1856.6 319V340M1755.3 319V326M1058.3 319V340M1320.5 319V326M1935.2 319V362M1064.8 319V336M1753.0 319V362M2018.3 319V346M1674.3 319V362M1217.8 319V362M1107.9 319V332M1381.5 319V324M1673.0 319V326M1302.4 319V324M1755.5 319V324M1883.8 319V336M1780.8 319V362M835.0 319V336M1361.8 319V326M1614.3 319V324M1093.0 319V354M1858.8 319V336M1995.6 319V362M1518.1 319V329M1598.6 319V346M1635.1 319V329M1039.6 319V362M972.5 319V326M931.7 319V362M1486.1 319V354M1650.1 319V324M1699.8 319V340M1022.4 319V332M1303.3 319V329M873.8 319V326M1979.8 319V326M1296.7 319V354M1664.8 319V324M903.0 319V346M1609.5 319V324M1418.1 319V332M1163.5 319V324M1043.1 319V329M1251.1 319V354M1236.2 319V336M2114.5 319V354M2140.6 319V326M1154.9 319V346M1733.0 319V332M1383.1 319V346M2001.1 319V354M859.8 319V332M946.8 319V329M1309.4 319V329M840.0 319V336M1359.8 319V340M983.5 319V362M1996.0 319V340M1369.4 319V326M2116.1 319V346M1934.9 319V340M1571.0 319V346M1085.7 319V336M1290.8 319V346M876.5 319V324M1286.7 319V329M1153.4 319V329M953.8 319V336M1558.9 319V329M1572.5 319V354M1949.0 319V332M1042.9 319V340M1119.5 319V346M1334.2 319V332M1227.6 319V354M1505.4 319V332M1978.5 319V329M2090.5 319V336M1627.3 319V354M1616.1 319V340M1545.3 319V346M1643.7 319V332M997.8 319V326M1736.9 319V326M1555.9 319V336M1814.6 319V346M868.2 319V329M1245.7 319V346M1780.9 319V329M1868.4 319V332M1259.4 319V326M920.9 319V340M1907.3 319V336M1087.8 319V336M947.5 319V336M998.6 319V346M1207.7 319V346M1959.7 319V354M1866.9 319V329M2083.3 319V329M869.4 319V340M2030.1 319V324M1711.8 319V354M1162.2 319V346M1301.0 319V326M1072.9 319V326M1192.3 319V332M1783.4 319V324M1371.3 319V329M1406.2 319V336M1038.8 319V324M1568.9 319V329M1585.3 319V332M1592.8 319V362M1170.7 319V346M1726.6 319V340M2081.9 319V326M1946.2 319V336M2035.6 319V324M2133.4 319V326M879.5 319V340M1111.0 319V340M1832.8 319V326M1388.1 319V346M2165.5 319V332M1206.1 319V326M1296.9 319V346M1422.0 319V340M1755.3 319V354M1510.5 319V332M1403.0 319V362M1962.7 319V329M1484.9 319V332M888.3 319V362M1179.3 319V362M1048.9 319V332M1557.7 319V332M2119.3 319V329M1308.6 319V346M953.6 319V336M1013.4 319V354M1726.8 319V332M1774.1 319V324M1519.5 319V354M1007.9 319V340M1763.9 319V329M2013.7 319V329M1616.1 319V332M1276.2 319V326M1563.5 319V329M1735.8 319V329M1631.0 319V354M1953.2 319V346M1942.1 319V326M1753.3 319V324M1312.2 319V332M887.9 319V336M1236.5 319V326M1768.7 319V354M2118.3 319V329M1264.0 319V354M1591.5 319V336M1054.7 319V326M890.8 319V354M2157.5 319V354M942.2 319V340M2141.5 319V336M975.4 319V354M2110.1 319V354M1083.8 319V362M1260.5 319V340M2060.4 319V336M1669.8 319V336M1703.7 319V326M1015.3 319V324M863.6 319V346M1953.3 319V336M1322.1 319V362M1961.5 319V329M966.5 319V336M1823.2 319V340M1337.5 319V340M1258.2 319V340M1012.3 319V340M1951.0 319V336M1150.1 319V324M973.3 319V346M2041.1 319V332M1491.4 319V354M1807.7 319V336M1636.2 319V326M1019.7 319V332M1048.8 319V354M1681.9 319V346M949.8 319V324M1968.2 319V354M1085.1 319V340M833.6 319V362M1399.1 319V336M926.1 319V324M1518.5 319V346M2021.6 319V326M1416.9 319V329M2039.5 319V329M1336.7 319V324M1422.8 319V340M1589.2 319V354M943.6 319V340M1521.4 319V346M2129.6 319V329M2133.7 319V326M1915.3 319V324M1797.0 319V340M1645.0 319V336M1585.9 319V346M2104.9 319V354M1708.3 319V329M1230.3 319V340M1539.6 319V324M1964.7 319V332M1738.0 319V354M1755.0 319V329M1713.7 319V340M1572.3 319V346M1311.6 319V332M1585.6 319V346M1179.2 319V332M1071.3 319V332M1563.3 319V326M1125.9 319V336M1699.2 319V332M1540.1 319V336M1778.7 319V332M1571.2 319V332M1554.1 319V326M1814.2 319V326M1969.3 319V326M1900.8 319V329M1985.3 319V362M1508.6 319V326M1668.3 319V362M966.4 319V346M1558.2 319V332M1583.3 319V326M1012.9 319V324M1370.9 319V324M1328.1 319V324M1769.1 319V332M1445.0 319V326M1776.5 319V346M2045.6 319V326M1661.1 319V332M1583.2 319V340M1054.6 319V340M1905.9 319V324M1934.7 319V326M1150.0 319V362M1816.4 319V340M1795.7 319V324M1922.5 319V340M963.1 319V362M1267.9 319V326M875.5 319V332M1170.5 319V332M1758.4 319V324M1951.4 319V354M981.8 319V324M1482.9 319V326M1901.3 319V329M1030.9 319V336M1999.0 319V346M1948.8 319V336M1550.3 319V336M2099.4 319V324M862.9 319V329M1481.7 319V354M1998.1 319V324M929.6 319V346M1957.8 319V329M1757.1 319V354M1356.3 319V362M931.3 319V340M1536.7 319V336M2026.1 319V324M1112.7 319V340M1803.0 319V340M1602.0 319V346M2084.2 319V340M837.8 319V354M1276.5 319V324M1162.7 319V324M1674.0 319V329M1194.7 319V336M914.8 319V336M1307.3 319V362M1611.9 319V329M2157.5 319V324M2054.3 319V326M1997.2 319V346M1677.0 319V326M1315.4 319V336M1891.0 319V332M1997.8 319V329M1741.6 319V336M2118.4 319V340M1819.4 319V362M1971.6 319V332M1298.7 319V362M1787.5 319V340M910.7 319V340M1728.7 319V354M1503.9 319V332M1912.7 319V340M1031.6 319V332M839.5 319V354M1371.7 319V346M1590.9 319V336M2073.6 319V326M1022.3 319V336M1167.2 319V362M1711.5 319V340M928.2 319V332M1610.4 319V326M1612.5 319V336M1606.6 319V354M1307.5 319V346M1794.9 319V326M1952.0 319V340M2033.0 319V336M2031.1 319V362M860.7 319V329M1668.1 319V332M1772.4 319V332M893.6 319V354M1097.9 319V336M1986.1 319V326M1093.0 319V324M2118.7 319V324M935.9 319V340M1792.0 319V324M1081.6 319V362M1689.6 319V324M1686.1 319V324M1113.8 319V340M1991.0 319V324M1698.2 319V346M1645.8 319V340M1063.3 319V346M1895.4 319V326M1667.9 319V340M1868.2 319V346M1173.7 319V354M1998.5 319V324M2068.0 319V340M904.8 319V340M1039.5 319V324M1038.8 319V329M1538.4 319V326M1308.7 319V340M1396.2 319V362M1740.0 319V362M1035.1 319V340M1137.6 319V336M1918.4 319V354M1851.3 319V336M1701.8 319V362M2137.7 319V354M1578.3 319V340M1530.1 319V336M1006.3 319V324M1576.7 319V326M1706.8 319V340M1031.3 319V332M1366.2 319V326M2083.6 319V329M993.4 319V362M1501.4 319V362M1870.1 319V336M2087.4 319V340M1816.9 319V329M1995.2 319V329M1537.0 319V340M1871.1 319V332M1420.7 319V354M1115.0 319V340M2035.6 319V346M1445.5 319V340M1886.7 319V324M974.1 319V324M917.4 319V346M1732.0 319V340M910.1 319V346M1378.4 319V346M2094.3 319V332M870.9 319V324M1180.8 319V346M1153.4 319V340M1101.7 319V346M1689.9 319V336M2006.6 319V354M1119.7 319V329M1468.6 319V336M2106.8 319V329M1930.9 319V336M948.1 319V324M1479.6 319V332M1046.1 319V354M1113.6 319V324M2011.2 319V332M1969.1 319V340M891.6 319V354M1073.8 319V329M2161.1 319V336M1746.7 319V326M1033.1 319V324M1008.3 319V336M1031.6 319V340M960.3 319V329M1451.4 319V346M950.5 319V340M1689.1 319V346M2010.0 319V324M1613.0 319V332M1889.8 319V324M880.5 319V362M1626.3 319V346M1764.4 319V324M894.5 319V340M916.2 319V326M991.0 319V354M2128.6 319V362M1403.2 319V329M1129.4 319V362M1027.8 319V362M1499.9 319V326M1539.0 319V354M2110.8 319V326M1297.4 319V332M1971.5 319V332M1808.6 319V336M1771.3 319V324M1184.0 319V326M2122.9 319V332M1510.6 319V346M1886.3 319V340M1187.4 319V340M1750.7 319V354M1557.7 319V362M1272.4 319V346M2144.4 319V336M1364.1 319V340M1552.4 319V346M2131.8 319V346M1848.1 319V346M1905.4 319V324M1149.8 319V362M2069.4 319V336M1758.1 319V346M2156.0 319V332M1717.6 319V326M1958.0 319V324M2045.6 319V324M1372.9 319V362M1263.9 319V354M1564.4 319V340M1439.3 319V324M1463.4 319V354M1512.5 319V362M2161.0 319V332M1933.8 319V346M1305.1 319V326M1356.4 319V362M1186.3 319V340M926.1 319V362M1718.7 319V336M1180.8 319V354M1977.6 319V340M1528.4 319V354M1593.5 319V329M917.9 319V362M1317.0 319V332M1535.7 319V340M1149.2 319V329M1033.8 319V354M1067.6 319V324M1260.7 319V340M1943.3 319V346M994.4 319V329M1770.0 319V346M967.4 319V340M1717.0 319V362M1527.5 319V354M1716.0 319V336M1359.1 319V354M1759.9 319V354M1679.1 319V329M1845.2 319V329M837.7 319V329M1320.8 319V362M1713.4 319V340M1530.2 319V346M1168.2 319V362M1098.6 319V336M907.1 319V329M1240.0 319V362M1197.3 319V340M1171.9 319V336M1946.0 319V326M1532.6 319V354M1979.2 319V332M1001.5 319V336M1656.6 319V340M2061.6 319V354M1332.6 319V324M1783.3 319V336M2127.6 319V346M1697.2 319V336M1301.3 319V346M1966.9 319V329M2067.4 319V332M2138.1 319V340M914.6 319V332M1270.7 319V326M936.8 319V354M1337.5 319V362M1384.8 319V324M974.1 319V354M2081.1 319V346M1385.0 319V354M1065.6 319V326M1418.4 319V354M1010.8 319V324M1726.9 319V332M1367.3 319V324M2068.7 319V336M1571.0 319V346M1860.1 319V326M950.3 319V326M1593.9 319V324M965.9 319V326M1964.8 319V332M1585.1 319V324M1932.5 319V332" stroke="#9be9f9" stroke-width="0.55" fill="none" opacity=".65"/>
<path d="M1781.3 933.6V917.6M1984.7 933.6V911.6M1754.5 933.6V917.6M1958.7 933.6V925.6M2165.5 933.6V897.6M896.8 933.6V905.6M1024.5 933.6V921.6M1084.4 933.6V928.6M1078.9 933.6V911.6M1197.4 933.6V921.6M945.7 933.6V917.6M1171.1 933.6V897.6M1229.6 933.6V917.6M1513.6 933.6V917.6M1741.2 933.6V921.6M1237.3 933.6V897.6M1338.6 933.6V917.6M1976.2 933.6V921.6M1237.9 933.6V925.6M899.5 933.6V911.6M1702.6 933.6V917.6M1708.1 933.6V905.6M1611.0 933.6V921.6M2074.9 933.6V921.6M1097.8 933.6V905.6M1574.0 933.6V928.6M1805.7 933.6V928.6M1543.2 933.6V917.6M2103.0 933.6V897.6M1262.8 933.6V921.6M1123.8 933.6V917.6M1219.9 933.6V905.6M1110.0 933.6V911.6M1647.1 933.6V917.6M2080.8 933.6V917.6M1102.6 933.6V925.6M907.0 933.6V917.6M1978.1 933.6V928.6M895.3 933.6V897.6M2007.3 933.6V897.6M1627.7 933.6V925.6M848.8 933.6V905.6M1580.6 933.6V897.6M1049.4 933.6V925.6M1731.5 933.6V905.6M1831.7 933.6V897.6M1112.2 933.6V897.6M1042.5 933.6V897.6M2058.1 933.6V925.6M1520.6 933.6V917.6M957.2 933.6V897.6M952.3 933.6V928.6M1384.7 933.6V905.6M1945.3 933.6V905.6M2042.0 933.6V905.6M1398.0 933.6V897.6M905.6 933.6V905.6M1008.3 933.6V925.6M1948.7 933.6V921.6M1844.4 933.6V897.6M1608.7 933.6V921.6M1775.8 933.6V905.6M1035.9 933.6V921.6M1263.9 933.6V897.6M1117.0 933.6V897.6M1720.2 933.6V925.6M1353.7 933.6V928.6M1268.2 933.6V925.6M1687.3 933.6V925.6M1706.1 933.6V905.6M955.0 933.6V917.6M1029.1 933.6V925.6M1405.0 933.6V905.6M1366.9 933.6V928.6M1938.5 933.6V928.6M1709.7 933.6V925.6M2162.8 933.6V911.6M1534.1 933.6V921.6M1485.4 933.6V928.6M1833.9 933.6V917.6M2020.0 933.6V928.6M1098.1 933.6V921.6M1986.0 933.6V911.6M1611.2 933.6V897.6M948.1 933.6V925.6M1459.4 933.6V897.6M2024.9 933.6V897.6M2039.8 933.6V911.6M2067.1 933.6V928.6M1606.1 933.6V928.6M2124.3 933.6V921.6M1089.9 933.6V925.6M1708.4 933.6V928.6M1059.9 933.6V921.6M1431.5 933.6V925.6M1270.8 933.6V921.6M1069.1 933.6V897.6M1943.2 933.6V897.6M922.7 933.6V911.6M1438.7 933.6V905.6M1567.9 933.6V897.6M1045.7 933.6V917.6M1447.2 933.6V928.6M882.8 933.6V911.6M959.9 933.6V905.6M1761.9 933.6V917.6M1603.3 933.6V921.6M931.8 933.6V905.6M1717.2 933.6V925.6M1310.8 933.6V905.6M2089.8 933.6V921.6M836.4 933.6V905.6M1998.6 933.6V917.6M1235.8 933.6V921.6M955.6 933.6V925.6M986.5 933.6V917.6M1191.7 933.6V911.6M987.1 933.6V917.6M1159.0 933.6V911.6M1546.4 933.6V911.6M1172.7 933.6V925.6M1209.2 933.6V911.6M1102.1 933.6V925.6M2045.4 933.6V905.6M1996.1 933.6V911.6M1150.5 933.6V928.6M850.0 933.6V928.6M1483.4 933.6V897.6M1768.4 933.6V925.6M1751.8 933.6V925.6M946.3 933.6V925.6M1035.4 933.6V921.6M2165.5 933.6V917.6M1356.1 933.6V911.6M976.5 933.6V911.6M2021.5 933.6V928.6M1718.2 933.6V925.6M1142.8 933.6V911.6M1866.8 933.6V911.6M1781.0 933.6V928.6M1929.0 933.6V928.6M1631.6 933.6V928.6M885.0 933.6V911.6M1864.0 933.6V925.6M1920.0 933.6V921.6M942.2 933.6V897.6M1447.8 933.6V925.6M844.2 933.6V917.6M1882.4 933.6V928.6M947.6 933.6V925.6M1027.9 933.6V911.6M1738.2 933.6V925.6M1897.2 933.6V897.6M1017.6 933.6V925.6M2067.5 933.6V905.6M1272.8 933.6V928.6M2164.4 933.6V897.6M2008.3 933.6V928.6M1495.3 933.6V897.6M1271.4 933.6V928.6M1835.4 933.6V905.6M913.6 933.6V897.6M1666.4 933.6V897.6M1319.1 933.6V917.6M953.4 933.6V905.6M2129.7 933.6V911.6M1046.9 933.6V917.6M1730.0 933.6V905.6M1493.8 933.6V921.6M1938.4 933.6V921.6M2040.6 933.6V905.6M1453.6 933.6V897.6M1903.3 933.6V911.6M1050.2 933.6V917.6M1934.0 933.6V897.6M2084.5 933.6V911.6M1229.9 933.6V911.6M1541.3 933.6V905.6M984.8 933.6V897.6M1883.6 933.6V921.6M1834.4 933.6V897.6M1140.4 933.6V925.6M1616.2 933.6V911.6M1146.5 933.6V917.6M1599.3 933.6V905.6M2020.2 933.6V928.6M1354.4 933.6V897.6M1358.1 933.6V905.6M1743.6 933.6V921.6M1934.8 933.6V917.6M2098.6 933.6V925.6M1702.9 933.6V897.6M1889.4 933.6V905.6M1625.8 933.6V897.6M1400.7 933.6V921.6M835.8 933.6V917.6M1637.8 933.6V928.6M2005.0 933.6V917.6M1390.0 933.6V911.6M1230.5 933.6V925.6M1278.7 933.6V925.6M941.0 933.6V917.6M1960.0 933.6V911.6M873.4 933.6V921.6M947.5 933.6V921.6M1080.4 933.6V917.6M1375.0 933.6V911.6M1909.9 933.6V928.6M1119.3 933.6V905.6M885.4 933.6V897.6M2029.5 933.6V917.6M1193.1 933.6V925.6M1314.7 933.6V925.6M1300.2 933.6V897.6M1646.4 933.6V917.6M1242.7 933.6V921.6M2108.8 933.6V911.6M1888.0 933.6V911.6M1083.3 933.6V897.6M2125.5 933.6V917.6M1535.3 933.6V928.6M1971.9 933.6V928.6M2094.4 933.6V917.6M1586.2 933.6V905.6M1165.4 933.6V921.6M1734.7 933.6V911.6M1812.8 933.6V897.6M1517.5 933.6V917.6M1010.5 933.6V897.6M2025.9 933.6V905.6M1386.5 933.6V911.6M1664.9 933.6V917.6M1186.2 933.6V921.6M1314.0 933.6V905.6M1779.0 933.6V905.6M1332.8 933.6V911.6M1912.0 933.6V928.6M2043.8 933.6V917.6M1490.0 933.6V905.6M2136.1 933.6V928.6M2001.0 933.6V905.6M989.1 933.6V917.6M1429.0 933.6V897.6M1515.6 933.6V925.6M1805.2 933.6V905.6M1443.9 933.6V921.6M1475.4 933.6V928.6M2105.1 933.6V921.6M1023.2 933.6V911.6M2058.3 933.6V911.6M892.3 933.6V917.6M1062.1 933.6V911.6M1688.3 933.6V921.6M1669.2 933.6V925.6M1219.4 933.6V911.6M864.3 933.6V911.6M2138.8 933.6V905.6M942.6 933.6V905.6M1685.5 933.6V917.6M2118.5 933.6V905.6M1311.9 933.6V921.6M1263.6 933.6V897.6M1599.5 933.6V897.6M894.5 933.6V911.6M1294.5 933.6V925.6M1098.5 933.6V897.6M2003.9 933.6V925.6M1242.0 933.6V911.6M1058.2 933.6V921.6M2044.3 933.6V911.6M1228.1 933.6V917.6M1869.7 933.6V921.6M2117.3 933.6V925.6M1194.3 933.6V917.6M1093.9 933.6V921.6M2071.7 933.6V917.6M974.9 933.6V921.6M1313.9 933.6V921.6M1345.7 933.6V917.6M1186.9 933.6V925.6M2068.7 933.6V911.6M1432.3 933.6V897.6M1376.1 933.6V925.6M1871.8 933.6V921.6M888.6 933.6V921.6M1842.9 933.6V917.6M1714.8 933.6V897.6M1727.2 933.6V897.6M932.1 933.6V917.6M1315.2 933.6V917.6M1538.2 933.6V921.6M1969.2 933.6V928.6M1177.4 933.6V897.6M845.5 933.6V911.6M1936.0 933.6V911.6M1238.7 933.6V911.6M2087.6 933.6V921.6M2141.9 933.6V928.6M2001.5 933.6V928.6M1838.4 933.6V905.6M1938.3 933.6V897.6M1910.7 933.6V928.6M2074.4 933.6V925.6M1692.6 933.6V905.6M1678.1 933.6V905.6M987.5 933.6V917.6M1357.7 933.6V897.6M1823.3 933.6V921.6M1365.1 933.6V917.6M1908.0 933.6V921.6M1987.4 933.6V905.6M1996.2 933.6V911.6M1814.3 933.6V917.6M1725.6 933.6V921.6M1008.5 933.6V921.6M1742.3 933.6V917.6M919.2 933.6V928.6M1969.9 933.6V905.6M1145.0 933.6V917.6M1370.0 933.6V911.6M1805.0 933.6V897.6M1960.3 933.6V897.6M1971.3 933.6V925.6M1032.1 933.6V905.6M1966.8 933.6V925.6M1499.7 933.6V921.6M2032.6 933.6V905.6M2127.7 933.6V905.6M1339.6 933.6V921.6M1005.5 933.6V905.6M2001.4 933.6V917.6M1649.3 933.6V921.6M1782.6 933.6V897.6M1637.2 933.6V897.6M1511.0 933.6V911.6M1114.9 933.6V925.6M1243.6 933.6V921.6M1734.4 933.6V897.6M935.1 933.6V928.6M1765.8 933.6V928.6M992.8 933.6V921.6M1122.1 933.6V917.6M1671.9 933.6V925.6M1427.8 933.6V911.6M908.9 933.6V917.6M1619.7 933.6V911.6M1910.2 933.6V928.6M1549.6 933.6V917.6M977.7 933.6V925.6M1223.4 933.6V921.6M2120.8 933.6V911.6M1590.5 933.6V925.6M1574.6 933.6V897.6M1109.5 933.6V897.6M2133.1 933.6V911.6M1548.5 933.6V928.6M1128.2 933.6V925.6M867.8 933.6V911.6M1188.5 933.6V921.6M914.2 933.6V905.6M1196.1 933.6V928.6M1612.5 933.6V917.6M1352.1 933.6V911.6M1377.2 933.6V905.6M1990.9 933.6V928.6M1905.9 933.6V911.6M1270.6 933.6V921.6M925.3 933.6V917.6M1600.1 933.6V917.6M1437.3 933.6V905.6M2007.9 933.6V911.6M1438.2 933.6V921.6M1653.7 933.6V928.6M1368.9 933.6V921.6M1846.2 933.6V928.6M1814.7 933.6V911.6M851.9 933.6V897.6M1094.4 933.6V905.6M1824.2 933.6V897.6M1185.2 933.6V911.6M1840.9 933.6V897.6M2131.9 933.6V905.6M1881.8 933.6V928.6M2060.9 933.6V905.6M1650.3 933.6V928.6M913.7 933.6V925.6M1389.1 933.6V897.6M1985.4 933.6V905.6M1829.9 933.6V911.6M1182.8 933.6V921.6M1669.6 933.6V911.6M1675.8 933.6V921.6M1239.0 933.6V928.6M1819.2 933.6V905.6M1305.2 933.6V928.6M1906.4 933.6V917.6M1863.8 933.6V921.6M972.6 933.6V925.6M1316.7 933.6V917.6M1480.2 933.6V928.6M2049.9 933.6V897.6M1256.1 933.6V897.6M2136.2 933.6V897.6M975.5 933.6V911.6M1166.0 933.6V917.6M1109.9 933.6V921.6M1708.1 933.6V925.6M1780.2 933.6V897.6M2142.0 933.6V917.6M1866.1 933.6V905.6M1343.9 933.6V897.6M2029.3 933.6V917.6M1008.9 933.6V928.6M978.5 933.6V905.6M1613.1 933.6V917.6M866.7 933.6V897.6M1940.9 933.6V897.6M944.9 933.6V897.6M887.7 933.6V911.6M1544.6 933.6V928.6M1978.7 933.6V921.6M1665.6 933.6V917.6M1478.2 933.6V905.6M2039.6 933.6V928.6M1155.5 933.6V921.6M1341.8 933.6V928.6M961.0 933.6V925.6M2094.2 933.6V917.6M1440.6 933.6V911.6M2061.6 933.6V905.6M1775.9 933.6V917.6M1849.1 933.6V911.6M1799.3 933.6V928.6M1982.9 933.6V925.6M1365.4 933.6V905.6M1983.2 933.6V925.6M1789.1 933.6V917.6M1755.9 933.6V917.6M1640.6 933.6V928.6M2046.3 933.6V911.6M1340.6 933.6V905.6M1149.1 933.6V925.6M836.4 933.6V911.6M1884.4 933.6V897.6M1129.8 933.6V905.6M1822.2 933.6V928.6M1154.5 933.6V925.6M1904.0 933.6V928.6M1454.1 933.6V917.6M1151.6 933.6V925.6M1867.4 933.6V928.6M2074.8 933.6V905.6M1603.4 933.6V917.6M1181.7 933.6V925.6M1456.0 933.6V917.6M1843.0 933.6V928.6M1846.2 933.6V905.6M959.0 933.6V925.6M1909.8 933.6V925.6M1654.0 933.6V921.6M971.4 933.6V897.6M2110.2 933.6V917.6M2056.1 933.6V928.6M926.3 933.6V928.6M1573.7 933.6V897.6M944.4 933.6V911.6M1659.3 933.6V911.6M1889.4 933.6V911.6M933.7 933.6V928.6M1714.9 933.6V911.6M1219.2 933.6V917.6M1727.3 933.6V911.6M1826.8 933.6V928.6M1080.5 933.6V911.6M1915.8 933.6V917.6M1109.2 933.6V905.6M1699.7 933.6V925.6M1728.7 933.6V928.6M1649.7 933.6V928.6M1560.6 933.6V921.6M1736.6 933.6V928.6M1806.9 933.6V897.6M2009.2 933.6V928.6M949.9 933.6V921.6M1234.9 933.6V897.6M1225.5 933.6V917.6M1641.3 933.6V921.6M1858.6 933.6V928.6M935.3 933.6V928.6M981.9 933.6V905.6M1856.7 933.6V925.6M1525.8 933.6V917.6M2146.2 933.6V911.6M1598.6 933.6V925.6M2056.1 933.6V905.6M1836.1 933.6V928.6M2051.4 933.6V897.6M908.6 933.6V905.6M870.8 933.6V905.6M1010.5 933.6V917.6M1901.9 933.6V928.6M1070.4 933.6V921.6M1420.9 933.6V905.6M1009.3 933.6V897.6M1232.0 933.6V921.6M867.7 933.6V917.6M956.6 933.6V917.6M1047.8 933.6V905.6M1707.5 933.6V917.6M1850.0 933.6V897.6M1837.9 933.6V897.6M1837.1 933.6V921.6M1905.2 933.6V928.6M1381.7 933.6V928.6M1285.7 933.6V911.6M2015.8 933.6V897.6M1269.7 933.6V897.6M1861.6 933.6V925.6M2020.6 933.6V897.6M935.9 933.6V925.6" stroke="#93e6f8" stroke-width="0.55" fill="none" opacity=".9"/>
<path d="M970.1 320V933.6M1934.4 320V933.6M1249.6 320V933.6M1668.8 320V933.6M1321.1 320V933.6M1548.8 320V933.6M2122.0 320V933.6M1045.4 320V933.6M1540.3 320V933.6M1699.6 320V933.6M1550.3 320V933.6M2085.0 320V933.6M1375.1 320V933.6M2052.6 320V933.6M1752.9 320V933.6M2124.4 320V933.6M949.8 320V933.6M1114.0 320V933.6M1214.4 320V933.6M2042.9 320V933.6M848.0 320V933.6M1178.0 320V933.6M1787.7 320V933.6M2154.2 320V933.6M1065.7 320V933.6M1415.9 320V933.6M1749.0 320V933.6M1754.0 320V933.6M1828.1 320V933.6M1837.6 320V933.6M1162.3 320V933.6M1173.9 320V933.6M866.8 320V933.6M1754.7 320V933.6M1109.8 320V933.6M1177.1 320V933.6M2120.2 320V933.6M1690.7 320V933.6M1620.9 320V933.6M1707.8 320V933.6M1629.9 320V933.6M1759.7 320V933.6M1236.5 320V933.6M915.4 320V933.6M919.3 320V933.6M849.3 320V933.6M1313.6 320V933.6M1020.1 320V933.6M980.8 320V933.6M1490.5 320V933.6M2127.2 320V933.6M1749.9 320V933.6M1195.7 320V933.6M1859.5 320V933.6M1067.9 320V933.6M963.7 320V933.6M1235.5 320V933.6M1377.0 320V933.6M1752.5 320V933.6M1425.2 320V933.6M1804.4 320V933.6M956.7 320V933.6M2077.4 320V933.6M1287.9 320V933.6M1943.6 320V933.6M870.9 320V933.6M1938.8 320V933.6M1132.6 320V933.6M1974.0 320V933.6M1904.2 320V933.6M1727.4 320V933.6M1201.3 320V933.6M842.9 320V933.6M1084.0 320V933.6M2040.7 320V933.6M1041.3 320V933.6M1712.0 320V933.6M1615.3 320V933.6M1714.6 320V933.6M1071.5 320V933.6M1022.0 320V933.6M959.7 320V933.6M2144.9 320V933.6M1342.3 320V933.6M1702.6 320V933.6M1592.1 320V933.6M1128.6 320V933.6M916.5 320V933.6M849.6 320V933.6M1970.7 320V933.6M1003.9 320V933.6M2118.6 320V933.6M1316.4 320V933.6M1796.8 320V933.6M1015.0 320V933.6M1884.3 320V933.6M1166.6 320V933.6M1319.9 320V933.6M1529.7 320V933.6M979.0 320V933.6M1162.1 320V933.6M1895.0 320V933.6M1211.6 320V933.6M1339.4 320V933.6M1853.2 320V933.6M1129.5 320V933.6M1089.3 320V933.6M1122.9 320V933.6M1343.9 320V933.6M1318.7 320V933.6M1688.2 320V933.6M1461.1 320V933.6M1993.6 320V933.6M897.5 320V933.6M1717.9 320V933.6M1949.1 320V933.6M1144.0 320V933.6M869.1 320V933.6M1416.4 320V933.6M984.8 320V933.6M1445.3 320V933.6M1782.0 320V933.6M955.2 320V933.6M987.4 320V933.6M1471.5 320V933.6M1062.4 320V933.6M1138.6 320V933.6M1419.0 320V933.6M988.1 320V933.6M920.7 320V933.6M1313.1 320V933.6M1457.6 320V933.6M2083.1 320V933.6M1572.2 320V933.6M925.5 320V933.6M1127.4 320V933.6M1825.7 320V933.6M1583.0 320V933.6M1994.3 320V933.6M2117.8 320V933.6M1977.9 320V933.6M977.1 320V933.6M2092.7 320V933.6M1532.1 320V933.6M1150.6 320V933.6M1058.2 320V933.6M1986.9 320V933.6M1114.0 320V933.6M941.0 320V933.6M1184.8 320V933.6" stroke="#3fc2e2" stroke-width="0.5" fill="none" opacity=".5"/>
<g fill="#e4fbff"><rect x="867.2" y="309" width="2.6" height="625.2"/><rect x="886.8" y="309" width="3.2" height="625.2"/><rect x="930.3" y="309" width="2.6" height="625.2"/><rect x="953.9" y="309" width="1.1" height="625.2"/><rect x="973.7" y="309" width="2.0" height="625.2"/><rect x="993.7" y="309" width="3.2" height="625.2"/><rect x="1014.9" y="309" width="3.2" height="625.2"/><rect x="1027.1" y="309" width="1.3" height="625.2"/><rect x="1036.8" y="309" width="2.0" height="625.2"/><rect x="1099.9" y="309" width="3.2" height="625.2"/><rect x="1120.9" y="309" width="3.2" height="625.2"/><rect x="1162.9" y="309" width="2.0" height="625.2"/><rect x="1193.8" y="309" width="4.0" height="625.2"/><rect x="1204.8" y="309" width="2.0" height="625.2"/><rect x="1226.7" y="309" width="2.0" height="625.2"/><rect x="1268.2" y="309" width="2.6" height="625.2"/><rect x="1279.0" y="309" width="1.0" height="625.2"/><rect x="1290.0" y="309" width="1.6" height="625.2"/><rect x="1312.2" y="309" width="1.0" height="625.2"/><rect x="1332.0" y="309" width="2.6" height="625.2"/><rect x="1353.4" y="309" width="1.0" height="625.2"/><rect x="1362.5" y="309" width="3.2" height="625.2"/><rect x="1373.9" y="309" width="1.0" height="625.2"/><rect x="1396.8" y="309" width="1.0" height="625.2"/><rect x="1435.2" y="309" width="4.5" height="625.2"/><rect x="1458.1" y="309" width="2.6" height="625.2"/><rect x="1480.2" y="309" width="1.5" height="625.2"/><rect x="1501.5" y="309" width="2.6" height="625.2"/><rect x="1531.8" y="309" width="2.6" height="625.2"/><rect x="1542.1" y="309" width="2.0" height="625.2"/><rect x="1562.7" y="309" width="3.2" height="625.2"/><rect x="1607.0" y="309" width="3.0" height="625.2"/><rect x="1628.6" y="309" width="1.6" height="625.2"/><rect x="1650.2" y="309" width="1.6" height="625.2"/><rect x="1669.6" y="309" width="3.2" height="625.2"/><rect x="1691.2" y="309" width="2.6" height="625.2"/><rect x="1701.6" y="309" width="1.6" height="625.2"/><rect x="1712.2" y="309" width="3.5" height="625.2"/><rect x="1732.8" y="309" width="3.0" height="625.2"/><rect x="1775.9" y="309" width="3.2" height="625.2"/><rect x="1797.4" y="309" width="2.6" height="625.2"/><rect x="1815.1" y="309" width="4.6" height="625.2"/><rect x="1838.9" y="309" width="3.0" height="625.2"/><rect x="1858.7" y="309" width="5.0" height="625.2"/><rect x="1963.1" y="309" width="5.0" height="625.2"/><rect x="1987.6" y="309" width="2.6" height="625.2"/><rect x="2007.9" y="309" width="5.0" height="625.2"/><rect x="2020.4" y="309" width="0.8" height="625.2"/><rect x="2070.8" y="309" width="0.8" height="625.2"/></g>
<path d="M348.4 950.4H778.8V933.6H828.8" stroke="#24788f" stroke-width="1.1" fill="none"/>
<path d="M348.4 950.4H778.3" stroke="#16a3c6" stroke-width="1.3" fill="none"/>
<path d="M828.8 934.0H2169.0" stroke="#2a8fab" stroke-width="0.8" fill="none"/>
<path d="M2169.4 318V933.6" stroke="#16a3c6" stroke-width="1.2" fill="none"/>
<path d="M2169.0 933.6H2171.8L2172.9 950.4" stroke="#2b7f95" stroke-width="1.1" fill="none"/>
<path d="M2172.9 950.4H2504.2" stroke="#22a4c5" stroke-width="1.2" fill="none"/>
</svg>
<svg id="mini" style="left:0;top:0" width="2560" height="1440" viewBox="0 0 2560 1440">
<rect x="348.4" y="989.6" width="2155.8" height="78.6" fill="#fff"/>
<rect x="738.2" y="989.6" width="1766" height="78.6" fill="#c1c9ce"/>
<path d="M1089 1066.8V1065H1131.6V1003.6H2229.3C2229.6 1040 2230.5 1063 2234 1066.8Z" fill="#3f9db9"/>
<path d="M1131.6 1003.9H2229" stroke="#3a93ad" stroke-width="0.8" fill="none"/>
<rect x="1215.6" y="1004" width="1.0" height="62" fill="#c6e6ee" opacity="0.8"/><rect x="1354.6" y="1004" width="0.7" height="62" fill="#c6e6ee" opacity="0.35"/><rect x="1546.9" y="1004" width="0.7" height="62" fill="#c6e6ee" opacity="0.35"/><rect x="1562.0" y="1004" width="1.2" height="62" fill="#c6e6ee" opacity="0.85"/><rect x="1569.7" y="1004" width="1.0" height="62" fill="#c6e6ee" opacity="0.8"/><rect x="1630.4" y="1004" width="1.2" height="62" fill="#c6e6ee" opacity="0.85"/><rect x="1647.8" y="1004" width="1.0" height="62" fill="#c6e6ee" opacity="0.7"/><rect x="1940.8" y="1004" width="1.3" height="62" fill="#c6e6ee" opacity="0.85"/><rect x="1976.3" y="1004" width="1.0" height="62" fill="#c6e6ee" opacity="0.75"/><rect x="2062.2" y="1004" width="1.3" height="62" fill="#c6e6ee" opacity="0.85"/>
<path d="M348.4 1067.2H2504.2" stroke="#2f8ca6" stroke-width="1.4" fill="none"/>
<rect x="348.4" y="989.6" width="2155.8" height="78.6" fill="none" stroke="#4e5f67" stroke-width="1.1"/>
</svg>
<svg id="icons" style="left:0;top:0" width="2560" height="1440" viewBox="0 0 2560 1440">
<g transform="translate(20.500 2.200) scale(.0352)"><path d="M318.7 268.7c-.2-36.700 16.400-64.400 50-84.800-18.800-26.900-47.200-41.700-84.700-44.600-35.500-2.800-74.300 20.700-88.500 20.700-15 0-49.400-19.700-76.400-19.700C63.300 141.200 4 184.800 4 273.500q0 39.300 14.400 81.200c12.800 36.700 59 126.700 107.200 125.200 25.200-.6 43-17.900 75.800-17.900 31.800 0 48.300 17.900 76.400 17.900 48.600-.7 90.400-82.500 102.600-119.300-65.200-30.700-61.700-90-61.700-91.900zm-56.600-164.200c27.300-32.400 24.800-61.900 24-72.500-24.100 1.400-52 16.400-67.900 34.900-17.500 19.800-27.800 44.300-25.600 71.900 26.100 2 49.900-11.400 69.500-34.300z" fill="#fff"/></g>
<circle cx="1811.3" cy="11.500" r="6.600" fill="#efefef"/><rect x="1808.600" y="8.800" width="5.400" height="5.400" rx="1.200" fill="#3d3f38"/><g fill="none" stroke="#efefef" stroke-width="1.250"><path d="M1850.500 14.500a6.700 6.700 0 1 0-6 3.600"/><path d="M1848.300 11.500a4 4 0 1 0-4 4"/></g><path d="M1844.600 9v3" stroke="#efefef" stroke-width="1.300"/><rect x="1846.800" y="13.800" width="5.800" height="4.800" rx=".8" fill="#efefef"/><path d="M1848.200 14v-1.300a1.500 1.500 0 0 1 3 0v1.300" fill="none" stroke="#efefef" stroke-width="1"/><g fill="none" stroke="#efefef" stroke-width="1.100"><ellipse cx="1879.600" cy="11.500" rx="3.200" ry="6.600"/><ellipse cx="1879.600" cy="11.500" rx="3.200" ry="6.600" transform="rotate(60 1879.600 11.500)"/><ellipse cx="1879.600" cy="11.500" rx="3.200" ry="6.600" transform="rotate(120 1879.600 11.500)"/></g><g fill="#efefef"><path d="M1909.700 3l4.500 2.900-4.500 2.900-4.500-2.900zM1918.700 3l4.500 2.900-4.500 2.900-4.500-2.900zM1909.700 9.200l4.500 2.900-4.500 2.900-4.500-2.900zM1918.700 9.200l4.500 2.900-4.500 2.900-4.500-2.900zM1914.200 13.400l4.200 2.700-4.200 2.700-4.200-2.700z"/></g><ellipse cx="1910.700" cy="16.400" rx="5.200" ry="4.500" fill="#d93b30"/><path d="M1941.400 18a8.700 8.700 0 1 1 15.600 0l-3.800-6.100-1.300 2.100-2.700-4.600-2.700 4.600-1.300-2.100z" fill="#efefef"/><path d="M1982 4.200l6.400 3.500v7.600l-6.400 3.500-6.400-3.500v-7.600z" fill="#efefef"/><path d="M1977.500 8.700l4.500 2.600 4.500-2.600M1982 11.300v5.500" stroke="#45473c" stroke-width="1.100" fill="none"/><g stroke="#efefef" stroke-width="2.600" stroke-linecap="round"><path d="M2011 6l9.500 4.600"/><path d="M2010.500 10.400l7.500 3.600"/></g><path d="M2010.600 14.600l4 1.900" stroke="#a9aaa4" stroke-width="2.600" stroke-linecap="round"/><rect x="2050.500" y="5" width="9.500" height="13.500" rx="1" fill="none" stroke="#efefef" stroke-width="1.200"/><path d="M2052 13.500l8 4.500M2060 9.500h-6" stroke="#efefef" stroke-width="1.100" fill="none"/><rect x="2045.400" y="7" width="8.400" height="8.400" rx="1" fill="#efefef"/><ellipse cx="2049.600" cy="11.200" rx="2" ry="2.400" fill="none" stroke="#3d3e36" stroke-width="1.200"/><rect x="2081.800" y="7.600" width="8" height="8" rx="1" fill="#efefef"/><path d="M2083.600 9.600h4.400M2085.800 9.600v4.600" stroke="#3d3e36" stroke-width="1.200"/><circle cx="2090.500" cy="6" r="1.900" fill="none" stroke="#efefef" stroke-width="1"/><circle cx="2094" cy="6.600" r="1.300" fill="none" stroke="#efefef" stroke-width=".9"/><path d="M2090.500 9.500h4.500v4.500a2.600 2.600 0 0 1-2.600 2.600" fill="none" stroke="#efefef" stroke-width="1"/><circle cx="2094.600" cy="15.600" r="3" fill="#2f9e34"/><path d="M2093.200 15.700l1 1 1.800-2" stroke="#fff" stroke-width=".8" fill="none"/><path d="M2120 19.500v-8.500c0-1.500.5-2.600 1.300-3.300l-.4-3.600h1.300l.7 2.900h3l.7-2.900h1.300l-.4 3.600c.8.7 1.300 1.800 1.300 3.300v8.500z" fill="#efefef"/><ellipse cx="2124.400" cy="11.600" rx="1.900" ry="1.300" fill="#8e8f88"/><rect x="2149.400" y="4.800" width="13.400" height="13.400" rx="2.200" fill="none" stroke="#efefef" stroke-width="1.500"/><path d="M2149.400 7.200h13.400" stroke="#efefef" stroke-width="1.600"/><path d="M2153 12.300l2.300 2.500 4-4.600" stroke="#efefef" stroke-width="1.500" fill="none"/><path d="M2185.200 8.600a6.200 6.200 0 1 1-.6 4.400" fill="none" stroke="#efefef" stroke-width="1.300"/><path d="M2182.800 10.600l2.200 2.600 2-2.800z" fill="#efefef"/><path d="M2190.800 7.800v4l2.400 1.600" fill="none" stroke="#efefef" stroke-width="1.200"/><g opacity=".42"><rect x="2224.600" y="6.400" width="11.400" height="10.200" rx="1.800" fill="none" stroke="#efefef" stroke-width="1.300"/><rect x="2220.200" y="6.600" width="2.400" height="2.400" rx=".6" fill="#efefef"/><rect x="2220.200" y="10.300" width="2.400" height="2.400" rx=".6" fill="#efefef"/><rect x="2220.200" y="14" width="2.400" height="2.400" rx=".6" fill="#efefef"/></g><path d="M2259.600 7.800l7 7.200-3.500 3.500v-14l3.500 3.500-7 7.200" fill="none" stroke="#efefef" stroke-width="1.150" stroke-linejoin="round"/><rect x="2288.600" y="6" width="21.400" height="11" rx="3" fill="none" stroke="#efefef" stroke-width="1" opacity=".85"/><path d="M2311.600 9.800v3.400" stroke="#efefef" stroke-width="1.400" stroke-linecap="round" opacity=".6"/><rect x="2290.200" y="7.600" width="14" height="7.800" rx="1.600" fill="#efefef"/><path d="M2297.600 5.600v3M2300.800 5.600v3M2296.200 8.600h6v2.600a3 3 0 0 1-6 0zM2299.200 13.500v4" stroke="#3d3e36" stroke-width="2.600" fill="#3d3e36"/><path d="M2297.800 6v2.800M2300.600 6v2.800" stroke="#efefef" stroke-width="1.100"/><path d="M2296.600 9h5.200v2.200a2.600 2.600 0 0 1-5.200 0z" fill="#efefef"/><path d="M2299.200 13.500v3.600" stroke="#efefef" stroke-width="1.300"/><g fill="none" stroke="#efefef" stroke-width="1.900" stroke-linecap="round"><path d="M2332.600 9.200a11 11 0 0 1 15.400 0"/><path d="M2335.400 12.200a7 7 0 0 1 9.800 0"/><path d="M2338.200 15a3.100 3.100 0 0 1 4.200 0"/></g><circle cx="2340.300" cy="17" r="1.100" fill="#efefef"/><circle cx="2374.200" cy="10.400" r="4.600" fill="none" stroke="#efefef" stroke-width="1.500" opacity=".9"/><path d="M2377.600 13.900l4 4" stroke="#efefef" stroke-width="1.700" stroke-linecap="round" opacity=".9"/><rect x="2397" y="5.200" width="12.400" height="5.600" rx="2.800" fill="none" stroke="#efefef" stroke-width="1.200"/><circle cx="2400" cy="8" r="1.500" fill="#efefef"/><rect x="2396.500" y="12.400" width="13.400" height="6" rx="3" fill="#efefef"/><circle cx="2406.600" cy="15.400" r="1.600" fill="#3d3e36"/><circle cx="2418.300" cy="11.600" r="2.500" fill="#f29a38"/>
<circle cx="39" cy="72.900" r="9.800" fill="#455a64"/><path d="M41.200 65.200l-6.600 8.800h3.700l-1.600 6.800 6.800-9.200h-3.800z" fill="#fff"/>
<path d="M230 76.200l6.900-9.400 6.900 9.400zM230 78h13.800v1.900h-13.800z" fill="#455a64"/>
<path d="M2512.22 65.45L2518.82 61.11L2526.11 65.45L2533.40 61.11L2540.69 65.45L2540.69 80.21L2533.40 84.55L2525.76 80.90L2519.17 84.72L2512.22 80.56Z" fill="#0ea9cc"/>
<path d="M2512.22 65.56L2540.69 80.73L2533.40 84.55L2519.17 75.87L2519.17 84.72L2512.22 80.56Z" fill="#72d4ea"/>
<path d="M2512.22 65.56L2516.39 67.78L2516.39 83.06L2512.22 80.56Z" fill="#7fd3dc"/>
<path d="M2519.17 75.87L2525.76 80.90L2519.17 84.72Z" fill="#1bb5c8"/>
<path d="M2530.28 66.32L2533.40 64.24L2533.40 68.40Z" fill="#49cbe8"/>
<path d="M2533.40 61.11L2540.69 65.45L2540.69 80.21L2536.18 77.78L2536.18 62.85Z" fill="#12a6cf"/>
<g transform="translate(321.700 128.700) scale(.605)"><path d="M19.140 12.940c.04-.3.06-.61.06-.94 0-.32-.02-.64-.07-.94l2.030-1.580c.18-.14.23-.41.12-.61l-1.920-3.320c-.12-.22-.37-.29-.59-.22l-2.390.96c-.5-.38-1.030-.7-1.620-.94l-.36-2.540c-.04-.24-.24-.41-.48-.41h-3.840c-.24 0-.43.17-.47.41l-.36 2.540c-.59.24-1.130.57-1.620.94l-2.390-.96c-.22-.08-.47 0-.59.22L2.740 8.870c-.12.21-.08.47.12.61l2.030 1.580c-.05.3-.09.63-.09.94s.02.64.07.94l-2.030 1.580c-.18.14-.23.41-.12.61l1.920 3.320c.12.22.37.29.59.22l2.390-.96c.5.38 1.030.7 1.620.94l.36 2.540c.05.24.24.41.48.41h3.840c.24 0 .44-.17.47-.41l.36-2.540c.59-.24 1.130-.56 1.620-.94l2.390.96c.22.08.47 0 .59-.22l1.920-3.320c.12-.22.07-.47-.12-.61l-2.010-1.580zM12 15.600c-1.980 0-3.600-1.620-3.600-3.600s1.620-3.600 3.600-3.600 3.600 1.620 3.600 3.600-1.620 3.600-3.600 3.600z" fill="#37474f"/></g>
<circle cx="111.900" cy="465.800" r="8.300" fill="#44525a"/><rect x="109.100" y="463" width="5.600" height="5.600" rx="1.100" fill="#fff"/>
<g fill="none" stroke="#37474f" stroke-width="1.700"><path d="M221.600 666.800l4.500-4.500 4.500 4.500"/><path d="M221.600 810.300l4.500 4.500 4.500-4.500"/><path d="M221.600 856.100l4.500 4.500 4.500-4.500"/></g>
<path d="M173.300 406.300l3.900 3.700 3.900-3.700" fill="none" stroke="#b4bcc0" stroke-width="1.400"/>
<g transform="translate(166.600 465.600) rotate(-9) scale(1.1)"><path d="M4.600 1.300c.9 0 1.400.6 1.400 1.400v4.500l.5-.1c.3-.9 1.700-.9 2.100 0 .5-.8 1.800-.6 2.100.3.600-.6 1.800-.3 1.900.7.300 1.600.6 3.100.1 4.700-.3 1-.9 1.700-1 3.700h-6.200c-.2-1.300-1.300-2.200-2.300-3.400-.9-1.100-1.700-2.300-2.500-3.400-.5-.8.400-1.700 1.300-1.200l1.200 1.100v-7c0-.8.600-1.300 1.400-1.300z" fill="#fff" stroke="#111" stroke-width="1"/><path d="M6.500 9.500v3.600M8.600 9.500v3.600M10.700 9.800v3.300" stroke="#111" stroke-width=".8"/></g>
</svg>
<div id="texts">
<span class="t" id="t0" style="left:54.4px;top:5.0px;font-size:13.2px;line-height:13.2px;font-weight:700;color:#fff;letter-spacing:0.064px;">nRF Connect for Desktop</span>
<span class="t" id="t1" style="left:236.5px;top:5.0px;font-size:13.2px;line-height:13.2px;color:#fff;letter-spacing:-0.078px;-webkit-text-stroke:.42px #fff;">Edit</span>
<span class="t" id="t2" style="left:280.4px;top:5.0px;font-size:13.2px;line-height:13.2px;color:#fff;letter-spacing:0.014px;-webkit-text-stroke:.42px #fff;">View</span>
<span class="t" id="t3" style="left:330.0px;top:5.0px;font-size:13.2px;line-height:13.2px;color:#fff;letter-spacing:0.219px;-webkit-text-stroke:.42px #fff;">Window</span>
<span class="t" id="t4" style="left:2434.3px;top:5.0px;font-size:13.2px;line-height:13.2px;color:#fff;letter-spacing:0.267px;-webkit-text-stroke:.42px #fff;">Wed 8 Oct</span>
<span class="t" id="t5" style="left:2506.5px;top:5.0px;font-size:13.2px;line-height:13.2px;color:#fff;letter-spacing:0.371px;-webkit-text-stroke:.42px #fff;">20:30</span>
<span class="t" id="t6" style="left:1102.0px;top:32.0px;font-size:13.6px;line-height:13.6px;font-weight:700;color:#b2b2b2;letter-spacing:0.104px;">Power Profiler v4.2.2: DC0A297C140A - Unsaved data*</span>
<span class="t" id="t7" style="left:68.5px;top:61.0px;font-size:13px;line-height:13px;font-weight:700;color:#37474f;letter-spacing:0.010px;">PPK2</span>
<span class="t" id="t8" style="left:68.5px;top:78.0px;font-size:10.4px;line-height:10.4px;color:#414e55;letter-spacing:0.025px;">DC0A297C140A</span>
<span class="t" id="t9" style="left:276.2px;top:66.0px;font-size:14px;line-height:14px;font-weight:700;color:#37474f;transform:scaleX(0.8964);transform-origin:0 50%;">DATA LOGGER</span>
<span class="t" id="t10" style="left:391.0px;top:66.0px;font-size:14px;line-height:14px;color:#414e55;transform:scaleX(0.8773);transform-origin:0 50%;">SCOPE</span>
<span class="t" id="t11" style="left:458.5px;top:66.0px;font-size:14px;line-height:14px;color:#414e55;transform:scaleX(0.9018);transform-origin:0 50%;">ABOUT</span>
<span class="t" id="t12" style="left:24.4px;top:132.0px;font-size:10.2px;line-height:10.2px;color:#37474f;letter-spacing:1.901px;">POWER SUPPLY MODE</span>
<span class="t" id="t13" style="left:36.5px;top:171.0px;font-size:14px;line-height:14px;color:#414e55;letter-spacing:-0.122px;">Source meter</span>
<span class="t" id="t14" style="left:135.4px;top:171.0px;font-size:14px;line-height:14px;color:#c6d0d5;letter-spacing:-0.073px;">Ampere meter</span>
<span class="t" id="t15" style="left:24.4px;top:214.0px;font-size:13px;line-height:13px;color:#3c4a52;transform:scaleX(0.9113);transform-origin:0 50%;">Set supply voltage to</span>
<span class="t" id="t16" style="left:178.8px;top:214.0px;font-size:14px;line-height:14px;color:#3c4a52;transform:scaleX(0.9693);transform-origin:0 50%;">3300</span>
<span class="t" id="t17" style="left:218.3px;top:215.0px;font-size:13px;line-height:13px;color:#3c4a52;transform:scaleX(0.8872);transform-origin:0 50%;">mV</span>
<span class="t" id="t18" style="left:24.4px;top:268.0px;font-size:13px;line-height:13px;color:#3c4a52;letter-spacing:-0.170px;">Enable power output</span>
<span class="t" id="t19" style="left:24.4px;top:320.0px;font-size:10.2px;line-height:10.2px;color:#3c4a52;letter-spacing:2.121px;">SAMPLING PARAMETERS</span>
<span class="t" id="t20" style="left:24.4px;top:348.0px;font-size:13px;line-height:13px;color:#3c4a52;transform:scaleX(0.9140);transform-origin:0 50%;">100,000 samples per second</span>
<span class="t" id="t21" style="left:24.4px;top:400.0px;font-size:13px;line-height:13px;color:#3c4a52;transform:scaleX(0.9145);transform-origin:0 50%;">Sample for</span>
<span class="t" id="t22" style="left:99.6px;top:400.0px;font-size:17px;line-height:17px;color:#b4bcc0;letter-spacing:1.175px;">&#8734;</span>
<span class="t" id="t23" style="left:130.6px;top:401.0px;font-size:13px;line-height:13px;color:#b4bcc0;transform:scaleX(0.8995);transform-origin:0 50%;">forever</span>
<span class="t" id="t24" style="left:130.2px;top:460.0px;font-size:14.5px;line-height:14.5px;color:#3c4a52;transform:scaleX(0.9215);transform-origin:0 50%;">Stop</span>
<span class="t" id="t25" style="left:33.3px;top:502.0px;font-size:10px;line-height:10px;color:#788a93;letter-spacing:0.019px;">Estimated space limit ~5d 18:48h at 2.2</span>
<span class="t" id="t26" style="left:33.3px;top:516.0px;font-size:10px;line-height:10px;color:#788a93;letter-spacing:-0.081px;">GB/h. Available disk space 299.8 GB</span>
<span class="t" id="t27" style="left:94.8px;top:574.0px;font-size:12px;line-height:12px;color:#bcc3c7;letter-spacing:-0.104px;">Save / Export</span>
<span class="t" id="t28" style="left:100.4px;top:606.0px;font-size:12px;line-height:12px;color:#bcc3c7;letter-spacing:-0.123px;">Screenshot</span>
<span class="t" id="t29" style="left:24.4px;top:659.0px;font-size:10.2px;line-height:10.2px;color:#3c4a52;letter-spacing:2.144px;">DISPLAY OPTIONS</span>
<span class="t" id="t30" style="left:24.4px;top:689.0px;font-size:13px;line-height:13px;color:#3c4a52;letter-spacing:0.054px;">Timestamps</span>
<span class="t" id="t31" style="left:24.4px;top:723.0px;font-size:13px;line-height:13px;color:#3c4a52;letter-spacing:-0.132px;">Digital channels</span>
<span class="t" id="t32" style="left:24.4px;top:757.0px;font-size:13px;line-height:13px;color:#3c4a52;letter-spacing:-0.124px;">Show Minimap</span>
<span class="t" id="t33" style="left:24.4px;top:809.0px;font-size:10.2px;line-height:10.2px;color:#3c4a52;letter-spacing:2.146px;">TEMP DISK</span>
<span class="t" id="t34" style="left:24.4px;top:855.0px;font-size:10.2px;line-height:10.2px;color:#3c4a52;letter-spacing:2.048px;">ADVANCED CONFIGURATION</span>
<span class="t" id="t35" style="left:24.4px;top:1369.0px;font-size:10.3px;line-height:10.3px;color:#414e55;transform:scaleX(0.8872);transform-origin:0 50%;">SHOW SIDE PANEL</span>
<span class="t" id="t36" style="left:352.9px;top:128.0px;font-size:13px;line-height:13px;color:#3c4a52;letter-spacing:-0.197px;">Lock Y-axis</span>
<span class="t" id="t37" style="left:1211.2px;top:129.0px;font-size:12px;line-height:12px;color:#3c4a52;letter-spacing:0.052px;">10ms</span>
<span class="t" id="t38" style="left:1280.0px;top:129.0px;font-size:12px;line-height:12px;color:#3c4a52;letter-spacing:0.117px;">100ms</span>
<span class="t" id="t39" style="left:1364.5px;top:129.0px;font-size:12px;line-height:12px;color:#3c4a52;transform:scaleX(0.9064);transform-origin:0 50%;">1s</span>
<span class="t" id="t40" style="left:1436.2px;top:129.0px;font-size:12px;line-height:12px;color:#3c4a52;transform:scaleX(0.9458);transform-origin:0 50%;">3s</span>
<span class="t" id="t41" style="left:1505.0px;top:129.0px;font-size:12px;line-height:12px;color:#3c4a52;transform:scaleX(0.9556);transform-origin:0 50%;">10s</span>
<span class="t" id="t42" style="left:1573.3px;top:129.0px;font-size:12px;line-height:12px;color:#3c4a52;letter-spacing:-0.005px;">1min</span>
<span class="t" id="t43" style="left:2359.8px;top:129.0px;font-size:12.5px;line-height:12.5px;color:#414e55;transform:scaleX(0.9568);transform-origin:0 50%;">(34 FPS) LIVE VIEW</span>
<span class="t" id="t44" style="left:1406.4px;top:156.0px;font-size:10.5px;line-height:10.5px;color:#6f7c83;letter-spacing:0.176px;">&#916;21.74s</span>
<span class="t" id="t45" style="left:1406.4px;top:964.0px;font-size:10.5px;line-height:10.5px;color:#6f7c83;letter-spacing:0.176px;">&#916;21.74s</span>
<span class="t" id="t46" style="left:296.4px;top:169.0px;font-size:12.5px;line-height:12.5px;color:#414e55;transform:scaleX(0.9468);transform-origin:0 50%;">150 mA</span>
<span class="t" id="t47" style="left:296.4px;top:428.0px;font-size:12.5px;line-height:12.5px;color:#414e55;transform:scaleX(0.9468);transform-origin:0 50%;">100 mA</span>
<span class="t" id="t48" style="left:303.4px;top:686.0px;font-size:12.5px;line-height:12.5px;color:#414e55;transform:scaleX(0.9352);transform-origin:0 50%;">50 mA</span>
<span class="t" id="t49" style="left:312.1px;top:945.0px;font-size:12.5px;line-height:12.5px;color:#414e55;letter-spacing:-0.206px;">0 nA</span>
<span class="t" id="t50" style="left:347.9px;top:1089.0px;font-size:10.2px;line-height:10.2px;color:#4a585f;transform:scaleX(0.9239);transform-origin:0 50%;">WINDOW</span>
<span class="t" id="t51" style="left:1430.4px;top:1089.0px;font-size:10.2px;line-height:10.2px;color:#4a585f;transform:scaleX(0.8866);transform-origin:0 50%;">SELECTION</span>
<span class="t" id="t52" style="left:2307.2px;top:1088.0px;font-size:10.3px;line-height:10.3px;color:#c9ced1;transform:scaleX(0.8861);transform-origin:0 50%;">ZOOM TO SELECTION</span>
<span class="t" id="t53" style="left:2410.5px;top:1088.0px;font-size:10.3px;line-height:10.3px;color:#4a555b;transform:scaleX(0.8845);transform-origin:0 50%;">SELECT ALL</span>
<span class="t" id="t54" style="left:2471.2px;top:1088.0px;font-size:10.3px;line-height:10.3px;color:#c9ced1;transform:scaleX(0.8444);transform-origin:0 50%;">CLEAR</span>
<span class="t" id="t55" style="left:1820.0px;top:1126.0px;font-size:12.5px;line-height:12.5px;color:#414e55;transform:scaleX(0.9227);transform-origin:0 50%;">Hold SHIFT+LEFT CLICK and DRAG to make a selection</span>
<span class="t" id="t56" style="left:451.3px;top:1116.0px;font-size:17.3px;line-height:17.3px;color:#424f56;letter-spacing:0.686px;">8.46</span>
<span class="t" id="t57" style="left:487.3px;top:1121.0px;font-size:11.5px;line-height:11.5px;color:#424f56;letter-spacing:0.150px;">mA</span>
<span class="t" id="t58" style="left:457.1px;top:1140.0px;font-size:12.5px;line-height:12.5px;color:#424f56;transform:scaleX(0.9140);transform-origin:0 50%;">average</span>
<span class="t" id="t59" style="left:710.0px;top:1116.0px;font-size:17.3px;line-height:17.3px;color:#424f56;letter-spacing:0.628px;">126.69</span>
<span class="t" id="t60" style="left:766.3px;top:1121.0px;font-size:11.5px;line-height:11.5px;color:#424f56;letter-spacing:-0.150px;">mA</span>
<span class="t" id="t61" style="left:735.4px;top:1140.0px;font-size:12.5px;line-height:12.5px;color:#424f56;transform:scaleX(0.9566);transform-origin:0 50%;">max</span>
<span class="t" id="t62" style="left:988.6px;top:1116.0px;font-size:17.3px;line-height:17.3px;color:#424f56;letter-spacing:0.412px;">21.74</span>
<span class="t" id="t63" style="left:1033.8px;top:1121.0px;font-size:11.5px;line-height:11.5px;color:#424f56;letter-spacing:-0.150px;">s</span>
<span class="t" id="t64" style="left:1002.7px;top:1140.0px;font-size:12.5px;line-height:12.5px;color:#424f56;letter-spacing:-0.175px;">time</span>
<span class="t" id="t65" style="left:1245.1px;top:1116.0px;font-size:17.3px;line-height:17.3px;color:#424f56;letter-spacing:0.508px;">183.97</span>
<span class="t" id="t66" style="left:1300.8px;top:1121.0px;font-size:11.5px;line-height:11.5px;color:#424f56;letter-spacing:-0.191px;">mC</span>
<span class="t" id="t67" style="left:1263.7px;top:1140.0px;font-size:12.5px;line-height:12.5px;color:#424f56;transform:scaleX(0.9599);transform-origin:0 50%;">charge</span>
<span class="t" id="t68" style="left:270.2px;top:1199.0px;font-size:14px;line-height:14px;color:#a7b5bc;letter-spacing:-0.105px;">20:28:55.980</span>
<span class="t" id="t69" style="left:370.5px;top:1199.0px;font-size:14px;line-height:14px;color:#a7b5bc;letter-spacing:0.025px;">Getting serial port options from the persistent store for DC0A297C140A.pc-nrfconnect-ppk</span>
<span class="t" id="t70" style="left:270.2px;top:1219.0px;font-size:14px;line-height:14px;color:#a7b5bc;letter-spacing:-0.105px;">20:28:56.003</span>
<span class="t" id="t71" style="left:370.5px;top:1219.0px;font-size:14px;line-height:14px;color:#a7b5bc;letter-spacing:0.025px;">Getting serial port options from the persistent store for DC0A297C140A.pc-nrfconnect-ppk</span>
<span class="t" id="t72" style="left:270.2px;top:1239.0px;font-size:14px;line-height:14px;color:#a7b5bc;letter-spacing:-0.105px;">20:29:54.526</span>
<span class="t" id="t73" style="left:370.5px;top:1239.0px;font-size:14px;line-height:14px;color:#a7b5bc;letter-spacing:-0.084px;">Selecting device with the serial number DC0A297C140A</span>
<span class="t" id="t74" style="left:270.2px;top:1259.0px;font-size:14px;line-height:14px;color:#a7b5bc;letter-spacing:-0.105px;">20:29:54.660</span>
<span class="t" id="t75" style="left:370.5px;top:1259.0px;font-size:14px;line-height:14px;color:#a7b5bc;letter-spacing:-0.088px;">Selected device with the serial number DC0A297C140A</span>
<span class="t" id="t76" style="left:270.2px;top:1279.0px;font-size:14px;line-height:14px;color:#a7b5bc;letter-spacing:-0.105px;">20:29:54.662</span>
<span class="t" id="t77" style="left:370.5px;top:1279.0px;font-size:14px;line-height:14px;color:#a7b5bc;letter-spacing:-0.051px;">Connected to the device with the serial number DC0A297C140A and family: Unknown</span>
<span class="t" id="t78" style="left:270.2px;top:1299.0px;font-size:14px;line-height:14px;color:#a7b5bc;letter-spacing:-0.105px;">20:29:54.810</span>
<span class="t" id="t79" style="left:370.5px;top:1299.0px;font-size:14px;line-height:14px;color:#a7b5bc;letter-spacing:-0.100px;">PPK started</span>
<span class="t" id="t80" style="left:270.2px;top:1319.0px;font-size:14px;line-height:14px;color:#a7b5bc;letter-spacing:-0.105px;">20:29:54.810</span>
<span class="t" id="t81" style="left:370.5px;top:1319.0px;font-size:14px;line-height:14px;color:#a7b5bc;transform:scaleX(0.9641);transform-origin:0 50%;">PPK opened</span>
<span class="t" id="t82" style="left:270.2px;top:1339.0px;font-size:14px;line-height:14px;color:#a7b5bc;letter-spacing:-0.105px;">20:30:13.062</span>
<span class="t" id="t83" style="left:370.5px;top:1339.0px;font-size:14px;line-height:14px;color:#a7b5bc;transform:scaleX(0.9154);transform-origin:0 50%;">DUT ON</span>
<span class="t" id="t84" style="left:282.3px;top:1369.0px;font-size:10.3px;line-height:10.3px;color:#dfe5e8;transform:scaleX(0.8634);transform-origin:0 50%;">CLEAR LOG</span>
<span class="t" id="t85" style="left:353.4px;top:1369.0px;font-size:10.3px;line-height:10.3px;color:#dfe5e8;transform:scaleX(0.8813);transform-origin:0 50%;">OPEN LOG FILE</span>
<span class="t" id="t86" style="left:2315.0px;top:1369.0px;font-size:10.3px;line-height:10.3px;color:#e6ebed;transform:scaleX(0.8791);transform-origin:0 50%;">AUTOSCROLL LOG</span>
<span class="t" id="t87" style="left:2458.0px;top:1369.0px;font-size:10.3px;line-height:10.3px;color:#e6ebed;transform:scaleX(0.8757);transform-origin:0 50%;">SHOW LOG</span>
<span class="t" id="t88" style="left:1188.3px;top:1397.0px;font-size:6.4px;line-height:6.4px;color:#fff;letter-spacing:-0.040px;">8866</span>
<span class="t" id="t89" style="left:1907.2px;top:15.0px;font-size:6.6px;line-height:6.6px;font-weight:700;color:#fff;letter-spacing:0.056px;">13</span>
</div>
</body></html>
